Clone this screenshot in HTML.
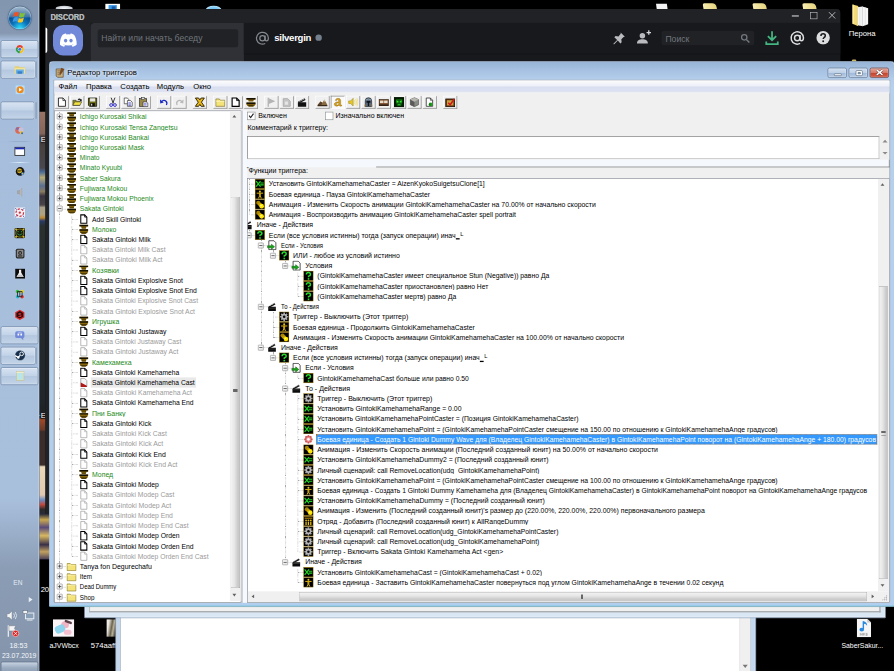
<!DOCTYPE html>
<html lang="ru"><head><meta charset="utf-8"><title>Редактор триггеров</title>
<style>
html,body{margin:0;padding:0;background:#000;width:894px;height:671px;overflow:hidden}
#s{position:absolute;left:0;top:0;width:1400px;height:1051px;transform:scale(0.6385714);transform-origin:0 0;background:#000;overflow:hidden;font-family:"Liberation Sans",sans-serif;font-size:11px;color:#000}
#s *{box-sizing:border-box}
.a{position:absolute}
/* taskbar */
#tb{left:0;top:0;width:61.5px;height:1051px;background:linear-gradient(180deg,#8396af 0,#8799b2 52px,#a6bddb 63px,#a9c0dd 780px,#8b9db5 890px,#8393aa 1051px);border-right:1px solid #6b7d94;box-shadow:inset -1px 0 0 rgba(225,235,248,.7)}
.tbtn{left:1px;width:57px;height:28px;border:1px solid #6f86a3;border-radius:3px;background:linear-gradient(180deg,#d7e3f2 0,#c2d3e8 48%,#b3c7df 52%,#c3d4e8 100%);box-shadow:inset 0 0 0 1px rgba(255,255,255,.55)}
.tico{left:22px;width:16px;height:16px}
.tray{color:#fff;font-size:12px;text-align:center;width:60px;left:0}
/* discord */
#dc{left:70.500px;top:14px;width:1245px;height:791px;background:#18191c;border-radius:6px 6px 0 0;overflow:hidden}
#dc .ttl{left:0;top:0;width:100%;height:22px;background:#202225}
#dc .guild{left:0;top:22px;width:71px;height:770px;background:#202225}
#dc .chan{left:71px;top:22px;width:240px;height:900px;background:#2f3136;border-radius:6px 0 0 0}
#dc .hdr{left:311px;top:22px;width:940px;height:48px;background:#18191c;box-shadow:0 1px 0 #101113}
/* win7 window */
#we{left:75.5px;top:95px;width:1326px;height:856px;border-radius:7px 7px 2px 2px;background:linear-gradient(180deg,#97b3d5 0,#a6c1e2 14px,#b3cdeb 28px,#b6d1ee 40px,#b1ceee 100%);border:1px solid #4a6078;border-bottom:1.500px solid #0c1c24;box-shadow:inset 0 0 0 1px rgba(255,255,255,.6),inset 0 -1.500px 0 #4fc3e0}
#cl{left:7px;top:29px;width:1310px;height:818px;background:#f0f0f0;border:1px solid #7a8a9c}
#mb{left:0;top:0;width:1308px;height:20px;background:linear-gradient(180deg,#fdfdfe 0,#eceff8 45%,#d8deef 55%,#dfe4f3 100%);border-bottom:1px solid #f7f7f7}
#mb span{position:absolute;top:3px;font-size:12px}
.cb{top:9.500px;width:30px;height:16px;border:1px solid #60738c;border-radius:3px;background:linear-gradient(180deg,#d3e0f0 0,#bfd1e8 48%,#9fb9d9 52%,#b9cde6 100%);box-shadow:inset 0 0 0 1px rgba(255,255,255,.55)}
.cbx{border-color:#6a3028;background:linear-gradient(180deg,#e7a596 0,#d67866 48%,#c3442f 52%,#d4634b 100%);box-shadow:inset 0 0 0 1px rgba(255,255,255,.3)}
.tbb{top:24px;width:22px;height:20px;border:1px solid;border-color:#fff #7c7c7c #7c7c7c #fff;background:#f0f0f0}
.tbb svg{position:absolute;left:2px;top:1px}
.tree{background:#fff;border:1px solid #828790;overflow:hidden}
.r{position:absolute;left:0;height:16px;width:3000px;white-space:nowrap}
.r .i{position:absolute;top:0;width:16px;height:16px}
.r .ic{display:block}
.r .t{position:absolute;top:0;height:16px;line-height:16.400px;padding:0 2px;font-size:11px;transform-origin:2px 0}
.t.gr{color:#1c8a22}.t.gy{color:#9a9a9a}.t.bk{color:#000}
.t.sel{background:#e9e9e9}
.t.hl{background:#3399ff;color:#fff;outline:1px dotted #cc6600;outline-offset:-1px}
.t sup{font-size:9px;line-height:0;vertical-align:3.500px;margin-left:1px}
.t u{text-decoration:none;display:inline-block;width:6px;height:1.600px;background:#000;color:transparent;line-height:1px;overflow:hidden;vertical-align:-2.500px}
.bx{position:absolute;width:9px;height:9px;border:1px solid #919191;background:linear-gradient(135deg,#fff,#e4e4e4);border-radius:1px}
.bx .h{position:absolute;left:1px;top:3px;width:5px;height:1px;background:#222}
.bx .v{position:absolute;left:3px;top:1px;width:1px;height:5px;background:#222}
.vl{position:absolute;width:0;border-left:1px dotted #a8a8a8}
.hl_{position:absolute;height:0;border-top:1px dotted #a8a8a8}
.sb{background:#f0f0f0}
.thumb{background:linear-gradient(90deg,#f3f3f3,#e6e6e6 40%,#cecece 75%,#c4c4c4);border:1px solid;border-color:#b4b4b4 #9c9c9c #9c9c9c #b4b4b4;border-radius:2px}
.thumbh{background:linear-gradient(180deg,#f3f3f3,#e6e6e6 40%,#cecece 75%,#c4c4c4);border:1px solid;border-color:#b4b4b4 #9c9c9c #9c9c9c #b4b4b4;border-radius:2px}
.arr{width:0;height:0;border:4px solid transparent}
.lbl{font-size:11px;white-space:nowrap}
.dk{color:#fff;font-size:12px;white-space:nowrap;text-align:center;text-shadow:0 1px 2px #000}
.dk span{display:inline-block;transform:scaleX(.9)}
</style></head><body>
<div id="s">
<!-- wallpaper strip -->
<div class="a" style="left:61px;top:175.4px;width:18px;height:700.6px;background:linear-gradient(180deg,#9a7464 0px,#86665a 34px,#463c3c 39px,#484240 60px,#48484e 88px,#4a6a98 94px,#b8ac78 103px,#5a7090 116px,#8a7a60 125px,#3a3440 132px,#4a4448 146px,#a8a088 150px,#b0a480 161px,#c08a30 166px,#283a68 171px,#2a302e 179px,#20262a 451px,#1e2020 479px,#a04a28 482px,#6a3a28 498px,#3a2c28 501px,#3a2c28 553px,#e8d8b8 556px,#e0c8b0 600px,#6a8ac0 608px,#c04a40 615px,#2a2a2a 623px,#2a2a3a 630px,#c8a850 639px,#5a4a7a 651px,#d8b860 664px,#3a3048 678px,#c0a060 689px,#4a4058 701px)"></div>
<div class="a dk" style="left:64px;top:210.8px;line-height:16px">E</div>
<div class="a dk" style="left:60px;top:643.1px;line-height:16px">·E</div>

<!-- top peeking icons -->
<div class="a" style="left:87px;top:8.500px;width:27px;height:8px;border-radius:50%;background:radial-gradient(ellipse at center,#f4f6f8 0,#c8ccd2 60%,#6a6e74 100%)"></div>
<div class="a" style="left:165px;top:6px;width:23px;height:9px;background:#fff"><i class="a" style="left:5px;top:2px;width:13px;height:7px;background:#3a9ae8"></i><i class="a" style="left:10px;top:4px;width:6px;height:4px;background:#1a5aa8"></i></div>
<div class="a" style="left:322px;top:8.500px;width:25px;height:14px;border-radius:50%;background:radial-gradient(ellipse at 50% 60%,#4ab4f0 0,#8ad0f8 55%,#eef8ff 85%)"></div>
<div class="a" style="left:1028px;top:6px;width:17px;height:10px;background:#f4f4f4;transform:skewX(8deg)"></div>
<div class="a" style="left:1101px;top:5px;width:21px;height:10px;background:linear-gradient(90deg,#f8eeb4,#e4d27a);border-radius:3px 6px 0 0;transform:skewX(10deg)"></div>
<div class="a" style="left:1179px;top:5px;width:21px;height:10px;background:linear-gradient(90deg,#f8eeb4,#e4d27a);border-radius:3px 6px 0 0;transform:skewX(10deg)"></div>
<div class="a" style="left:1257px;top:5px;width:21px;height:10px;background:linear-gradient(90deg,#f8eeb4,#e4d27a);border-radius:3px 6px 0 0;transform:skewX(10deg)"></div>
<!-- Perona folder -->
<svg class="a" style="left:1331px;top:4px" width="34" height="38" viewBox="0 0 34 38"><path d="M4 3l9 2.500v31.500l-9-4z" fill="#f4da74"/><path d="M4 3l2.500.7v30.400L4 33z" fill="#fbe89a"/><path d="M11.500 7.500l8-1.500 9 3v25l-8.500 3-8.500-2z" fill="#f7f7f7"/><path d="M19.500 6v31" stroke="#c4c4c4" stroke-width="1"/><path d="M15.500 6.800v29.500M24 7.500v28" stroke="#dedede" stroke-width="1"/><path d="M11.500 7.500v27.500" stroke="#d8c46a" stroke-width="1"/></svg>
<div class="a dk" style="left:1310px;top:45px;width:80px;line-height:16px">Перона</div>
<div class="a" style="left:1334px;top:93px;width:7px;height:3px;background:#c8b868;border-radius:2px 2px 0 0"></div>
<!-- labels / thumbs bottom -->
<div class="a dk" style="left:64px;top:915px;line-height:16px;text-align:left;letter-spacing:-.5px">20</div>
<div class="a" style="left:83px;top:970px;width:32.500px;height:27px;background:#fbf4f7"><i class="a" style="left:13px;top:3px;width:12px;height:11px;border-radius:6px;background:#f0b4c4"></i><i class="a" style="left:3px;top:9px;width:16px;height:12px;background:#8ed4ec;border-radius:5px;transform:rotate(-25deg)"></i><i class="a" style="left:18px;top:2px;width:12px;height:4px;background:#5a4048;border-radius:2px;transform:rotate(20deg)"></i><i class="a" style="left:17px;top:16px;width:12px;height:8px;background:#f4c0d0;border-radius:4px"></i></div>
<div class="a dk" style="left:60px;top:1002px;width:81px;line-height:16px"><span>aJVWbcx</span></div>
<div class="a" style="left:166.500px;top:970px;width:17px;height:27px;background:linear-gradient(100deg,#f4f2ee 0,#e8e4dc 20%,#6a6450 45%,#b8b098 60%,#4a4636 80%,#2a2820 100%)"></div>
<div class="a dk" style="left:142px;top:1002px;line-height:16px;text-align:left">574aaff...</div>
<!-- mp3 -->
<svg class="a" style="left:1338px;top:968.500px" width="29" height="29" viewBox="0 0 29 29"><path d="M4 0h16l6 6v23H4z" fill="#f6f6f6"/><path d="M20 0v6h6z" fill="#c8c8c8"/><path d="M14 4v12.500" stroke="#2a8ae0" stroke-width="2.200"/><path d="M14 4q6 1 6 7-2-3.500-6-3z" fill="#2a8ae0"/><ellipse cx="11.500" cy="17" rx="3.600" ry="2.800" fill="#2a8ae0"/><rect x="8" y="22" width="13" height="5" fill="#e4e4e4"/><path d="M9.500 26v-3l1.500 2 1.500-2v3M14 26v-3h1.500q1 .8 0 1.600H14M18 23h1.800v1.500H18.500M18 26h1.800v-1.500" stroke="#8a8a8a" stroke-width=".7" fill="none"/></svg>
<div class="a dk" style="left:1300px;top:1002px;width:100px;line-height:16px"><span>SaberSakur...</span></div>

<!-- window B (white, behind) -->
<div class="a" style="left:181px;top:700px;width:1003px;height:360px;background:#c3d7ee;border:1px solid #6d7f95;box-shadow:inset 0 0 0 1px rgba(255,255,255,.7)">
 <div class="a" style="left:6px;top:0;width:988px;height:360px;background:#fff;border-left:1px solid #9aa7b6;border-right:1px solid #9aa7b6"></div>
 <div class="a" style="left:976px;top:0;width:17px;height:360px;background:#f0f0f0;border-left:1px solid #e2e2e2"><i class="a arr" style="left:4px;top:340px;border-top:5px solid #777;border-bottom:0"></i></div>
</div>
<!-- window A (WE main window bottom frame) -->
<div class="a" style="left:132px;top:700px;width:1255px;height:267.500px;background:#d9e6f4;border:1px solid #8da0b6;border-radius:0 0 1px 1px;box-shadow:inset 0 0 0 1px rgba(255,255,255,.7)">
 <div class="a" style="left:7px;top:0;width:1239px;height:258px;background:#f0f0f0;border:1px solid #a0a4aa;border-width:0 2px 2px 1px"></div>
</div>

<div id="dc" class="a">
 <div class="a ttl"></div>
 <div class="a guild"></div>
 <div class="a chan"></div>
 <div class="a hdr"></div>
 <div class="a" style="left:8px;top:6px;font-size:12.800px;font-weight:bold;color:#b4b7bb;line-height:14px;transform:scaleX(.9);transform-origin:0 0;text-shadow:.4px 0 0 #a9acb1">DISCORD</div>
 <div class="a" style="left:0;top:29px;width:3px;height:40px;background:#fff;border-radius:0 4px 4px 0"></div>
 <div class="a" style="left:12px;top:25px;width:47px;height:48px;background:#7289da;border-radius:16px">
  <svg class="a" style="left:9px;top:11px" width="30" height="26" viewBox="0 0 30 26"><path d="M6 4.500C8.500 3 11 2.500 11.500 2.600L12 4Q15 3.600 18 4L18.500 2.600C19 2.500 21.500 3 24 4.500C27 9 28.500 15 28 20C26 21.800 23.500 22.800 21.500 23.200L20 21C21.500 20.500 22.500 20 23.500 19.200C18 22 12 22 6.500 19.200C7.500 20 8.500 20.500 10 21L8.500 23.200C6.500 22.800 4 21.800 2 20C1.500 15 3 9 6 4.500Z" fill="#fff"/><ellipse cx="10.800" cy="13.500" rx="2.600" ry="2.900" fill="#7289da"/><ellipse cx="19.200" cy="13.500" rx="2.600" ry="2.900" fill="#7289da"/></svg>
 </div>
 <div class="a" style="left:82px;top:32px;width:220px;height:28px;background:#202225;border-radius:4px"></div>
 <div class="a" style="left:88px;top:37px;font-size:13.500px;color:#72767d;line-height:18px;white-space:nowrap">Найти или начать беседу</div>
 <svg class="a" style="left:328px;top:33.500px" width="24" height="24" viewBox="0 0 25 25"><circle cx="12.500" cy="12.500" r="4.300" fill="none" stroke="#858990" stroke-width="2"/><path d="M16.800 8v6.500q0 2.300 2.200 2.300 3.200 0 3.200-4.800A9.700 9.700 0 1 0 17 21" fill="none" stroke="#858990" stroke-width="2"/></svg>
 <div class="a" style="left:359px;top:36px;font-size:15px;font-weight:bold;color:#fff;line-height:18px;letter-spacing:-.45px">silvergin</div>
 <div class="a" style="left:423px;top:40px;width:10px;height:10px;border-radius:5px;background:#747f8d"></div>
 <!-- window controls -->
 <div class="a" style="left:1169px;top:10px;width:11px;height:1.500px;background:#b9bbbe"></div>
 <div class="a" style="left:1198px;top:5px;width:11px;height:11px;border:1.500px solid #b9bbbe"></div>
 <svg class="a" style="left:1226px;top:4px" width="12" height="12" viewBox="0 0 12 12"><path d="M1 1l10 10M11 1L1 11" stroke="#b9bbbe" stroke-width="1.500"/></svg>
 <!-- header right icons -->
 <svg class="a" style="left:886px;top:34px" width="24" height="24" viewBox="0 0 24 24"><path d="M15 3l6.500 6.500-2 .5-3.500 3.500.5 4.500-2 2-4-4.500-6 6-1-1 6-6-4.500-4 2-2 4.500.5L15 5z" fill="#b9bbbe"/></svg>
 <svg class="a" style="left:925px;top:33px" width="28" height="24" viewBox="0 0 28 24"><circle cx="10" cy="9" r="4.300" fill="#b9bbbe"/><path d="M1.500 21c0-5 3.500-6.500 8.500-6.500s8.500 1.500 8.500 6.500z" fill="#b9bbbe"/><path d="M20 .5v7M16.500 4h7" stroke="#d4d6d8" stroke-width="2"/></svg>
 <div class="a" style="left:965px;top:34px;width:145px;height:23px;background:#202225;border-radius:4px"></div>
 <div class="a" style="left:971.500px;top:39px;font-size:13.500px;color:#72767d;line-height:16px">Поиск</div>
 <svg class="a" style="left:1088px;top:38px" width="16" height="16" viewBox="0 0 16 16"><circle cx="6.500" cy="6.500" r="4.200" fill="none" stroke="#72767d" stroke-width="2"/><path d="M9.800 9.800L14.500 14.500" stroke="#72767d" stroke-width="2.400"/></svg>
 <svg class="a" style="left:1126px;top:33px" width="24" height="26" viewBox="0 0 24 26"><path d="M12 2v13M5.500 9.500L12 16l6.500-6.500" stroke="#43b581" stroke-width="2.800" fill="none"/><path d="M3 18v4h18v-4" stroke="#43b581" stroke-width="2.800" fill="none"/></svg>
 <svg class="a" style="left:1165px;top:33px" width="25" height="25" viewBox="0 0 25 25"><circle cx="12.500" cy="12.500" r="4.300" fill="none" stroke="#dcddde" stroke-width="2.300"/><path d="M16.800 8v6.500q0 2.300 2.200 2.300 3.200 0 3.200-4.800A9.700 9.700 0 1 0 17 21" fill="none" stroke="#dcddde" stroke-width="2.300"/></svg>
 <svg class="a" style="left:1207px;top:34px" width="22" height="22" viewBox="0 0 22 22"><circle cx="11" cy="11" r="10.500" fill="#dcddde"/><path d="M7.600 8.300q0-3.300 3.400-3.300t3.400 3q0 1.800-1.900 2.800-1.300.8-1.300 2.200" fill="none" stroke="#18191c" stroke-width="2.400"/><circle cx="11.100" cy="16.600" r="1.500" fill="#18191c"/></svg>
</div>

<div id="we" class="a">
 <!-- title -->
 <svg class="a" style="left:8px;top:9px" width="18" height="18" viewBox="0 0 18 18"><path d="M3 3h9l2 2v11H5l-2-2z" fill="#c8b080" stroke="#5a4020" stroke-width="1"/><path d="M5 6h6M5 9h6M5 12h5" stroke="#6a5030" stroke-width="1"/><path d="M11 1l5 2-6 9-2-1z" fill="#7a4a20"/></svg>
 <div class="a" style="left:29px;top:11px;font-size:12px;line-height:15px;white-space:nowrap;text-shadow:0 0 6px #fff,0 0 6px #fff">Редактор триггеров</div>
 <!-- caption buttons -->
 <div class="a cb" style="left:1219px"><i class="a" style="left:9px;top:8px;width:12px;height:4px;background:#fff;border:1px solid #54657a;border-radius:1.500px"></i></div>
 <div class="a cb" style="left:1252px"><i class="a" style="left:10px;top:3px;width:11px;height:9px;background:#fff;border:1px solid #54657a;border-radius:2px"></i><i class="a" style="left:13.500px;top:6px;width:5px;height:3px;background:#7f9cc0;border:1px solid #54657a;border-radius:1px"></i></div>
 <div class="a cb cbx" style="left:1285px"><svg class="a" style="left:8px;top:1.500px" width="13" height="11" viewBox="0 0 13 11"><path d="M2 1.500l9 8M11 1.500l-9 8" stroke="#5a3434" stroke-width="3.800"/><path d="M2 1.500l9 8M11 1.500l-9 8" stroke="#fff" stroke-width="2.300"/></svg></div>
 <!-- client -->
 <div id="cl" class="a">
  <div id="mb" class="a"><span style="left:7px">Файл</span><span style="left:50px">Правка</span><span style="left:104px">Создать</span><span style="left:161px">Модуль</span><span style="left:218px">Окно</span></div>
  <div class="a tbb" style="left:1.0px"><svg width="16" height="16" viewBox="0 0 16 16"><path d="M2.500 1.500h7l4 4v9h-11z" fill="#fff" stroke="#000" stroke-width="1.200"/><path d="M9.500 1.500v4h4" fill="none" stroke="#000" stroke-width="1"/></svg></div>
<div class="a tbb" style="left:25.0px"><svg width="16" height="16" viewBox="0 0 16 16"><path d="M1 5h5l1 1.500h5V13H1z" fill="#8a8a20" stroke="#222" stroke-width=".8"/><path d="M1 13l3-5.500h11L12 13z" fill="#f0e040" stroke="#222" stroke-width=".8"/><path d="M9 3q3-2 5 1l1-1v3.500h-3.500l1-1q-1.500-2-3.500-.5z" fill="#222"/></svg></div>
<div class="a tbb" style="left:49.0px"><svg width="16" height="16" viewBox="0 0 16 16"><path d="M1.500 1.500h13v13h-11.500l-1.500-1.500z" fill="#6a6a14" stroke="#111" stroke-width="1.200"/><rect x="4" y="2" width="8" height="5" fill="#e8e8e8"/><rect x="4.500" y="9.500" width="7" height="5" fill="#111"/><rect x="5.500" y="10.500" width="2" height="3" fill="#ccc"/></svg></div>
<div class="a tbb" style="left:81.0px"><svg width="16" height="16" viewBox="0 0 16 16"><path d="M5 1l3.500 9M11 1L7.500 10" stroke="#222" stroke-width="1.400" fill="none"/><circle cx="5" cy="12.500" r="2.200" fill="none" stroke="#2a2ac8" stroke-width="1.500"/><circle cx="11" cy="12.500" r="2.200" fill="none" stroke="#2a2ac8" stroke-width="1.500"/></svg></div>
<div class="a tbb" style="left:105.0px"><svg width="16" height="16" viewBox="0 0 16 16"><path d="M1.500 1.500h5l2 2v7h-7z" fill="#fff" stroke="#222" stroke-width="1"/><path d="M6.500 5.500h5l2.500 2.500v6.500h-7.500z" fill="#fff" stroke="#222" stroke-width="1"/><path d="M8 9h4M8 11h4M8 13h4" stroke="#2a2ac8" stroke-width="1"/></svg></div>
<div class="a tbb" style="left:129.0px"><svg width="16" height="16" viewBox="0 0 16 16"><rect x="1.500" y="2.500" width="11" height="12" fill="#9a8a4a" stroke="#222" stroke-width="1"/><rect x="4.500" y="1" width="5" height="3" fill="#ddd" stroke="#222" stroke-width=".8"/><path d="M7 7.500h5l2.500 2v5.500H7z" fill="#fff" stroke="#222" stroke-width="1"/><path d="M8.500 10.500h4M8.500 12.500h4" stroke="#2a2ac8" stroke-width="1"/></svg></div>
<div class="a tbb" style="left:161.0px"><svg width="16" height="16" viewBox="0 0 16 16"><path d="M3 8.500q4-5.500 8-2 2.500 2.500.5 6" stroke="#1a2ac0" stroke-width="2" fill="none"/><path d="M1.500 4l.5 6 5.500-1.500z" fill="#1a2ac0"/></svg></div>
<div class="a tbb" style="left:185.0px"><svg width="16" height="16" viewBox="0 0 16 16"><path d="M13 8.500q-4-5.500-8-2-2.500 2.500-.5 6" stroke="#b8b8b8" stroke-width="2" fill="none"/><path d="M14.500 4l-.5 6-5.500-1.500z" fill="#b8b8b8"/></svg></div>
<div class="a tbb" style="left:217.0px"><svg width="16" height="16" viewBox="0 0 16 16"><path d="M1 1.500h5l2 3 2-3h5L10.500 8l4.500 6.500h-5L8 11.500l-2 3H1L5.500 8z" fill="#e8b818" stroke="#221a00" stroke-width="1.400"/></svg></div>
<div class="a tbb" style="left:249.0px"><svg width="16" height="16" viewBox="0 0 16 16"><path d="M1 3h5.500l1.500 2h7v9.500h-14z" fill="#f4e27a" stroke="#7a6a20" stroke-width="1"/><path d="M1.500 6.500h13" stroke="#fffbd0" stroke-width="1.200"/></svg></div>
<div class="a tbb" style="left:273.0px"><svg width="16" height="16" viewBox="0 0 16 16"><path d="M2.500 1.500h7l4 4v9h-11z" fill="#fff" stroke="#000" stroke-width="1.800"/><path d="M9.500 1.500v4h4" fill="none" stroke="#000" stroke-width="1.300"/></svg></div>
<div class="a tbb" style="left:297.0px"><svg width="16" height="16" viewBox="0 0 16 16"><path d="M1 1.500h14v2.600h-2.500l-1 3h-7l-1-3H1z" fill="#7a5c0a"/><path d="M1 1.500h14v2.400H1z" fill="#161000"/><path d="M1 8.500h14v2.600q-.5 3-4 4h-6q-3.500-1-4-4z" fill="#7a5c0a"/><path d="M1 8.500h14v2.400H1z" fill="#161000"/><path d="M4 13.500h8" stroke="#3a2a02" stroke-width="1.500"/></svg></div>
<div class="a tbb" style="left:329.0px"><svg width="16" height="16" viewBox="0 0 16 16"><path d="M3 1v14" stroke="#a0a0a0" stroke-width="1.600"/><path d="M4 2l10 4.500-10 4.500z" fill="#b4b4b4"/></svg></div>
<div class="a tbb" style="left:353.0px"><svg width="16" height="16" viewBox="0 0 16 16"><path d="M2.500 2.500h7l4 4v8h-11z" fill="#c4c4c4" stroke="#a4a4a4" stroke-width="1.200"/><rect x="5" y="7" width="5" height="5" fill="#e4e4e4"/></svg></div>
<div class="a tbb" style="left:377.0px"><svg width="16" height="16" viewBox="0 0 16 16"><path d="M1.500 8h13v7h-13z" fill="#111"/><path d="M1.500 7.500L12 2l1.500 2.500L3 10z" fill="#1c1c1c"/><path d="M4 7l1.600-.9M7 5.400l1.600-.9M10 3.800l1.500-.8" stroke="#e8e8e8" stroke-width="1.400"/></svg></div>
<div class="a tbb" style="left:409.0px"><svg width="16" height="16" viewBox="0 0 16 16"><path d="M0 13l5-6 3 2 3-5 5 9z" fill="#8a6a42"/><path d="M0 13l5-6 3 2-2 4z" fill="#5a4228"/><path d="M0 12.500h16v2H0z" fill="#3a2a18"/><path d="M9.500 6.500l1.500-2.500 2 3.500z" fill="#d8c8a8"/></svg></div>
<div class="a tbb" style="left:433.0px;border-color:#7c7c7c #fff #fff #7c7c7c;background:#fafafa"><svg width="16" height="16" viewBox="0 0 16 16"><path d="M4 5q1-3 4.500-3 4 0 4 3.500v6q0 1.200 1.500 1v1.500q-3.500 1-4.200-1.200-1.800 1.700-4.300 1.500-3-.3-3-3 0-3.800 7-4v-1.300q0-2-2-2-1.800 0-1.800 1.800zM9.500 9q-4 .2-4 2 0 1.500 1.600 1.500 1.400 0 2.400-1.200z" fill="#d8a010" stroke="#6a4a00" stroke-width=".5"/></svg></div>
<div class="a tbb" style="left:457.0px"><svg width="16" height="16" viewBox="0 0 16 16"><path d="M1 6h3l4-4v12l-4-4H1z" fill="#e8c820" stroke="#8a7210" stroke-width=".7"/><path d="M10 5q2 3 0 6M12 3.500q3 4.500 0 9M14 2q3.500 6 0 12" stroke="#f0d850" stroke-width="1" fill="none"/></svg></div>
<div class="a tbb" style="left:481.0px"><svg width="16" height="16" viewBox="0 0 16 16"><path d="M3 15V6q0-5 5-5t5 5v9z" fill="#5a6a7a" stroke="#1a2028" stroke-width="1"/><path d="M5 6h6v3H9v5H7V9H5z" fill="#0e1418"/><path d="M4 4.500q4-3 8 0" stroke="#9ab0c4" stroke-width="1.200" fill="none"/><path d="M2 12l2-1v4H2zM14 12l-2-1v4h2z" fill="#8a6a3a"/></svg></div>
<div class="a tbb" style="left:505.0px"><svg width="16" height="16" viewBox="0 0 16 16"><rect x="0.500" y="4" width="15" height="8" fill="#7a4a28" stroke="#2a1808" stroke-width="1"/><rect x="2" y="5.500" width="5.500" height="4" fill="#e8dcc8"/><rect x="8.500" y="5.500" width="5.500" height="4" fill="#e8dcc8"/><path d="M0 12h16v2H0z" fill="#3a2210"/></svg></div>
<div class="a tbb" style="left:529.0px"><svg width="16" height="16" viewBox="0 0 16 16"><rect width="16" height="16" fill="#041a04"/><path d="M3 3h10v6l-2 5H5L3 9z" fill="#0a5a0a"/><path d="M4 5l3 1.500v2H4zM12 5L9 6.500v2h3z" fill="#30e830"/><path d="M6 11h4v2H6z" fill="#20b020"/></svg></div>
<div class="a tbb" style="left:553.0px"><svg width="16" height="16" viewBox="0 0 16 16"><path d="M8 1l6.500 3v8L8 15 1.500 12V4z" fill="#8a8a86" stroke="#3a3a38" stroke-width=".8"/><path d="M8 7.500V15L1.500 12V4z" fill="#5a5a58"/><path d="M8 7.500L14.500 4 8 1 1.500 4z" fill="#b8b8b2"/></svg></div>
<div class="a tbb" style="left:577.0px"><svg width="16" height="16" viewBox="0 0 16 16"><path d="M2.500 1.500h6.500l3.500 3.500v9.500h-10z" fill="#fff" stroke="#222" stroke-width="1.200"/><path d="M9 1.500v3.500h3.500" fill="none" stroke="#222" stroke-width="1"/><path d="M7 9h5v5H7z" fill="#20a020"/><path d="M6 11.500l3-3v6z" fill="#107010"/></svg></div>
<div class="a tbb" style="left:609.0px"><svg width="16" height="16" viewBox="0 0 16 16"><rect x="1" y="3" width="14" height="12" fill="#6a3a10" stroke="#1a0a00" stroke-width="1.200"/><rect x="3" y="5" width="10" height="8" fill="#c8a040"/><path d="M5 9l3 3 6.500-9" stroke="#d01818" stroke-width="2.400" fill="none"/></svg></div>
  <!-- left tree: abs (85.5,174) -> rel client (85.5-85, 174-125) -->
  <div class="a tree" id="lt" style="left:0px;top:47px;width:293px;height:771px">
   <i class="vl" style="left:7.5px;top:0.6px;height:16px"></i><i class="hl_" style="left:7.5px;top:8.6px;width:10px"></i><i class="vl" style="left:7.5px;top:16.6px;height:16px"></i><i class="hl_" style="left:7.5px;top:24.6px;width:10px"></i><i class="vl" style="left:7.5px;top:32.6px;height:16px"></i><i class="hl_" style="left:7.5px;top:40.6px;width:10px"></i><i class="vl" style="left:7.5px;top:48.6px;height:16px"></i><i class="hl_" style="left:7.5px;top:56.6px;width:10px"></i><i class="vl" style="left:7.5px;top:64.6px;height:16px"></i><i class="hl_" style="left:7.5px;top:72.6px;width:10px"></i><i class="vl" style="left:7.5px;top:80.6px;height:16px"></i><i class="hl_" style="left:7.5px;top:88.6px;width:10px"></i><i class="vl" style="left:7.5px;top:96.6px;height:16px"></i><i class="hl_" style="left:7.5px;top:104.6px;width:10px"></i><i class="vl" style="left:7.5px;top:112.6px;height:16px"></i><i class="hl_" style="left:7.5px;top:120.6px;width:10px"></i><i class="vl" style="left:7.5px;top:128.6px;height:16px"></i><i class="hl_" style="left:7.5px;top:136.6px;width:10px"></i><i class="vl" style="left:7.5px;top:144.6px;height:16px"></i><i class="hl_" style="left:7.5px;top:152.6px;width:10px"></i><i class="vl" style="left:7.5px;top:160.6px;height:16px"></i><i class="vl" style="left:26.5px;top:160.6px;height:16px"></i><i class="hl_" style="left:26.5px;top:168.6px;width:10px"></i><i class="vl" style="left:7.5px;top:176.6px;height:16px"></i><i class="vl" style="left:26.5px;top:176.6px;height:16px"></i><i class="hl_" style="left:26.5px;top:184.6px;width:10px"></i><i class="vl" style="left:7.5px;top:192.6px;height:16px"></i><i class="vl" style="left:26.5px;top:192.6px;height:16px"></i><i class="hl_" style="left:26.5px;top:200.6px;width:10px"></i><i class="vl" style="left:7.5px;top:208.6px;height:16px"></i><i class="vl" style="left:26.5px;top:208.6px;height:16px"></i><i class="hl_" style="left:26.5px;top:216.6px;width:10px"></i><i class="vl" style="left:7.5px;top:224.6px;height:16px"></i><i class="vl" style="left:26.5px;top:224.6px;height:16px"></i><i class="hl_" style="left:26.5px;top:232.6px;width:10px"></i><i class="vl" style="left:7.5px;top:240.6px;height:16px"></i><i class="vl" style="left:26.5px;top:240.6px;height:16px"></i><i class="hl_" style="left:26.5px;top:248.6px;width:10px"></i><i class="vl" style="left:7.5px;top:256.6px;height:16px"></i><i class="vl" style="left:26.5px;top:256.6px;height:16px"></i><i class="hl_" style="left:26.5px;top:264.6px;width:10px"></i><i class="vl" style="left:7.5px;top:272.6px;height:16px"></i><i class="vl" style="left:26.5px;top:272.6px;height:16px"></i><i class="hl_" style="left:26.5px;top:280.6px;width:10px"></i><i class="vl" style="left:7.5px;top:288.6px;height:16px"></i><i class="vl" style="left:26.5px;top:288.6px;height:16px"></i><i class="hl_" style="left:26.5px;top:296.6px;width:10px"></i><i class="vl" style="left:7.5px;top:304.6px;height:16px"></i><i class="vl" style="left:26.5px;top:304.6px;height:16px"></i><i class="hl_" style="left:26.5px;top:312.6px;width:10px"></i><i class="vl" style="left:7.5px;top:320.6px;height:16px"></i><i class="vl" style="left:26.5px;top:320.6px;height:16px"></i><i class="hl_" style="left:26.5px;top:328.6px;width:10px"></i><i class="vl" style="left:7.5px;top:336.6px;height:16px"></i><i class="vl" style="left:26.5px;top:336.6px;height:16px"></i><i class="hl_" style="left:26.5px;top:344.6px;width:10px"></i><i class="vl" style="left:7.5px;top:352.6px;height:16px"></i><i class="vl" style="left:26.5px;top:352.6px;height:16px"></i><i class="hl_" style="left:26.5px;top:360.6px;width:10px"></i><i class="vl" style="left:7.5px;top:368.6px;height:16px"></i><i class="vl" style="left:26.5px;top:368.6px;height:16px"></i><i class="hl_" style="left:26.5px;top:376.6px;width:10px"></i><i class="vl" style="left:7.5px;top:384.6px;height:16px"></i><i class="vl" style="left:26.5px;top:384.6px;height:16px"></i><i class="hl_" style="left:26.5px;top:392.6px;width:10px"></i><i class="vl" style="left:7.5px;top:400.6px;height:16px"></i><i class="vl" style="left:26.5px;top:400.6px;height:16px"></i><i class="hl_" style="left:26.5px;top:408.6px;width:10px"></i><i class="vl" style="left:7.5px;top:416.6px;height:16px"></i><i class="vl" style="left:26.5px;top:416.6px;height:16px"></i><i class="hl_" style="left:26.5px;top:424.6px;width:10px"></i><i class="vl" style="left:7.5px;top:432.6px;height:16px"></i><i class="vl" style="left:26.5px;top:432.6px;height:16px"></i><i class="hl_" style="left:26.5px;top:440.6px;width:10px"></i><i class="vl" style="left:7.5px;top:448.6px;height:16px"></i><i class="vl" style="left:26.5px;top:448.6px;height:16px"></i><i class="hl_" style="left:26.5px;top:456.6px;width:10px"></i><i class="vl" style="left:7.5px;top:464.6px;height:16px"></i><i class="vl" style="left:26.5px;top:464.6px;height:16px"></i><i class="hl_" style="left:26.5px;top:472.6px;width:10px"></i><i class="vl" style="left:7.5px;top:480.6px;height:16px"></i><i class="vl" style="left:26.5px;top:480.6px;height:16px"></i><i class="hl_" style="left:26.5px;top:488.6px;width:10px"></i><i class="vl" style="left:7.5px;top:496.6px;height:16px"></i><i class="vl" style="left:26.5px;top:496.6px;height:16px"></i><i class="hl_" style="left:26.5px;top:504.6px;width:10px"></i><i class="vl" style="left:7.5px;top:512.6px;height:16px"></i><i class="vl" style="left:26.5px;top:512.6px;height:16px"></i><i class="hl_" style="left:26.5px;top:520.6px;width:10px"></i><i class="vl" style="left:7.5px;top:528.6px;height:16px"></i><i class="vl" style="left:26.5px;top:528.6px;height:16px"></i><i class="hl_" style="left:26.5px;top:536.6px;width:10px"></i><i class="vl" style="left:7.5px;top:544.6px;height:16px"></i><i class="vl" style="left:26.5px;top:544.6px;height:16px"></i><i class="hl_" style="left:26.5px;top:552.6px;width:10px"></i><i class="vl" style="left:7.5px;top:560.6px;height:16px"></i><i class="vl" style="left:26.5px;top:560.6px;height:16px"></i><i class="hl_" style="left:26.5px;top:568.6px;width:10px"></i><i class="vl" style="left:7.5px;top:576.6px;height:16px"></i><i class="vl" style="left:26.5px;top:576.6px;height:16px"></i><i class="hl_" style="left:26.5px;top:584.6px;width:10px"></i><i class="vl" style="left:7.5px;top:592.6px;height:16px"></i><i class="vl" style="left:26.5px;top:592.6px;height:16px"></i><i class="hl_" style="left:26.5px;top:600.6px;width:10px"></i><i class="vl" style="left:7.5px;top:608.6px;height:16px"></i><i class="vl" style="left:26.5px;top:608.6px;height:16px"></i><i class="hl_" style="left:26.5px;top:616.6px;width:10px"></i><i class="vl" style="left:7.5px;top:624.6px;height:16px"></i><i class="vl" style="left:26.5px;top:624.6px;height:16px"></i><i class="hl_" style="left:26.5px;top:632.6px;width:10px"></i><i class="vl" style="left:7.5px;top:640.6px;height:16px"></i><i class="vl" style="left:26.5px;top:640.6px;height:16px"></i><i class="hl_" style="left:26.5px;top:648.6px;width:10px"></i><i class="vl" style="left:7.5px;top:656.6px;height:16px"></i><i class="vl" style="left:26.5px;top:656.6px;height:16px"></i><i class="hl_" style="left:26.5px;top:664.6px;width:10px"></i><i class="vl" style="left:7.5px;top:672.6px;height:16px"></i><i class="vl" style="left:26.5px;top:672.6px;height:16px"></i><i class="hl_" style="left:26.5px;top:680.6px;width:10px"></i><i class="vl" style="left:7.5px;top:688.6px;height:16px"></i><i class="vl" style="left:26.5px;top:688.6px;height:8px"></i><i class="hl_" style="left:26.5px;top:696.6px;width:10px"></i><i class="vl" style="left:7.5px;top:704.6px;height:16px"></i><i class="hl_" style="left:7.5px;top:712.6px;width:10px"></i><i class="vl" style="left:7.5px;top:720.6px;height:16px"></i><i class="hl_" style="left:7.5px;top:728.6px;width:10px"></i><i class="vl" style="left:7.5px;top:736.6px;height:16px"></i><i class="hl_" style="left:7.5px;top:744.6px;width:10px"></i><i class="vl" style="left:7.5px;top:752.6px;height:16px"></i><i class="hl_" style="left:7.5px;top:760.6px;width:10px"></i>
<div class="r" style="top:0.6px">
<i class="bx" style="left:3.0px;top:3.5px"><b class="h"></b><b class="v"></b></i>
<span class="i" style="left:18.3px"><svg class="ic" width="16" height="16" viewBox="0 0 16 16"><path d="M1.500 1h13.500v2.600h-2.500l-1 3.400h-6.500l-1-3.400h-2.500z" fill="#7c5e0a"/><path d="M4.800 5.500h6.900l-.4 1.500h-6.100z" fill="#4e3a04"/><path d="M1.500 1h13.500v2.300H1.500z" fill="#161000"/><path d="M1.500 8h13.500v2.600q-.5 3.400-4 4.400h-5.500q-3.500-1-4-4.400z" fill="#86660c"/><path d="M2.400 12.500q1.200 2 3.100 2.500h5.500q1.900-.5 3.100-2.500z" fill="#4e3a04"/><path d="M1.500 8h13.500v2.300H1.500z" fill="#161000"/></svg></span><span class="t gr" id="L0" style="left:37.8px;transform:scaleX(0.9649)">Ichigo Kurosaki Shikai</span></div>
<div class="r" style="top:16.6px">
<i class="bx" style="left:3.0px;top:3.5px"><b class="h"></b><b class="v"></b></i>
<span class="i" style="left:18.3px"><svg class="ic" width="16" height="16" viewBox="0 0 16 16"><path d="M1.500 1h13.500v2.600h-2.500l-1 3.400h-6.500l-1-3.400h-2.500z" fill="#7c5e0a"/><path d="M4.800 5.500h6.900l-.4 1.500h-6.100z" fill="#4e3a04"/><path d="M1.500 1h13.500v2.300H1.500z" fill="#161000"/><path d="M1.500 8h13.500v2.600q-.5 3.400-4 4.400h-5.500q-3.500-1-4-4.400z" fill="#86660c"/><path d="M2.400 12.500q1.200 2 3.100 2.500h5.500q1.900-.5 3.100-2.500z" fill="#4e3a04"/><path d="M1.500 8h13.500v2.300H1.500z" fill="#161000"/></svg></span><span class="t gr" id="L1" style="left:37.8px;transform:scaleX(0.9795)">Ichigo Kurosaki Tensa Zangetsu</span></div>
<div class="r" style="top:32.6px">
<i class="bx" style="left:3.0px;top:3.5px"><b class="h"></b><b class="v"></b></i>
<span class="i" style="left:18.3px"><svg class="ic" width="16" height="16" viewBox="0 0 16 16"><path d="M1.500 1h13.500v2.600h-2.500l-1 3.400h-6.500l-1-3.400h-2.500z" fill="#7c5e0a"/><path d="M4.800 5.500h6.900l-.4 1.500h-6.100z" fill="#4e3a04"/><path d="M1.500 1h13.500v2.300H1.500z" fill="#161000"/><path d="M1.500 8h13.500v2.600q-.5 3.400-4 4.400h-5.500q-3.500-1-4-4.400z" fill="#86660c"/><path d="M2.400 12.500q1.200 2 3.100 2.500h5.500q1.900-.5 3.100-2.500z" fill="#4e3a04"/><path d="M1.500 8h13.500v2.300H1.500z" fill="#161000"/></svg></span><span class="t gr" id="L2" style="left:37.8px;transform:scaleX(0.9682)">Ichigo Kurosaki Bankai</span></div>
<div class="r" style="top:48.6px">
<i class="bx" style="left:3.0px;top:3.5px"><b class="h"></b><b class="v"></b></i>
<span class="i" style="left:18.3px"><svg class="ic" width="16" height="16" viewBox="0 0 16 16"><path d="M1.500 1h13.500v2.600h-2.500l-1 3.400h-6.500l-1-3.400h-2.500z" fill="#7c5e0a"/><path d="M4.800 5.500h6.900l-.4 1.500h-6.100z" fill="#4e3a04"/><path d="M1.500 1h13.500v2.300H1.500z" fill="#161000"/><path d="M1.500 8h13.500v2.600q-.5 3.400-4 4.400h-5.500q-3.500-1-4-4.400z" fill="#86660c"/><path d="M2.400 12.500q1.200 2 3.100 2.500h5.500q1.900-.5 3.100-2.500z" fill="#4e3a04"/><path d="M1.500 8h13.500v2.300H1.500z" fill="#161000"/></svg></span><span class="t gr" id="L3" style="left:37.8px;transform:scaleX(0.9644)">Ichigo Kurosaki Mask</span></div>
<div class="r" style="top:64.6px">
<i class="bx" style="left:3.0px;top:3.5px"><b class="h"></b><b class="v"></b></i>
<span class="i" style="left:18.3px"><svg class="ic" width="16" height="16" viewBox="0 0 16 16"><path d="M1.500 1h13.500v2.600h-2.500l-1 3.400h-6.500l-1-3.400h-2.500z" fill="#7c5e0a"/><path d="M4.800 5.500h6.900l-.4 1.500h-6.100z" fill="#4e3a04"/><path d="M1.500 1h13.500v2.300H1.500z" fill="#161000"/><path d="M1.500 8h13.500v2.600q-.5 3.400-4 4.400h-5.500q-3.500-1-4-4.400z" fill="#86660c"/><path d="M2.400 12.500q1.200 2 3.100 2.500h5.500q1.900-.5 3.100-2.500z" fill="#4e3a04"/><path d="M1.500 8h13.500v2.300H1.500z" fill="#161000"/></svg></span><span class="t gr" id="L4" style="left:37.8px;transform:scaleX(0.9334)">Minato</span></div>
<div class="r" style="top:80.6px">
<i class="bx" style="left:3.0px;top:3.5px"><b class="h"></b><b class="v"></b></i>
<span class="i" style="left:18.3px"><svg class="ic" width="16" height="16" viewBox="0 0 16 16"><path d="M1.500 1h13.500v2.600h-2.500l-1 3.400h-6.500l-1-3.400h-2.500z" fill="#7c5e0a"/><path d="M4.800 5.500h6.900l-.4 1.500h-6.100z" fill="#4e3a04"/><path d="M1.500 1h13.500v2.300H1.500z" fill="#161000"/><path d="M1.500 8h13.500v2.600q-.5 3.400-4 4.400h-5.500q-3.500-1-4-4.400z" fill="#86660c"/><path d="M2.400 12.500q1.200 2 3.100 2.500h5.500q1.900-.5 3.100-2.500z" fill="#4e3a04"/><path d="M1.500 8h13.500v2.300H1.500z" fill="#161000"/></svg></span><span class="t gr" id="L5" style="left:37.8px;transform:scaleX(0.9498)">Minato Kyuubi</span></div>
<div class="r" style="top:96.6px">
<i class="bx" style="left:3.0px;top:3.5px"><b class="h"></b><b class="v"></b></i>
<span class="i" style="left:18.3px"><svg class="ic" width="16" height="16" viewBox="0 0 16 16"><path d="M1.500 1h13.500v2.600h-2.500l-1 3.400h-6.500l-1-3.400h-2.500z" fill="#7c5e0a"/><path d="M4.800 5.500h6.900l-.4 1.500h-6.100z" fill="#4e3a04"/><path d="M1.500 1h13.500v2.300H1.500z" fill="#161000"/><path d="M1.500 8h13.500v2.600q-.5 3.400-4 4.400h-5.500q-3.500-1-4-4.400z" fill="#86660c"/><path d="M2.400 12.500q1.200 2 3.100 2.500h5.500q1.900-.5 3.100-2.500z" fill="#4e3a04"/><path d="M1.500 8h13.500v2.300H1.500z" fill="#161000"/></svg></span><span class="t gr" id="L6" style="left:37.8px;transform:scaleX(0.9519)">Saber Sakura</span></div>
<div class="r" style="top:112.6px">
<i class="bx" style="left:3.0px;top:3.5px"><b class="h"></b><b class="v"></b></i>
<span class="i" style="left:18.3px"><svg class="ic" width="16" height="16" viewBox="0 0 16 16"><path d="M1.500 1h13.500v2.600h-2.500l-1 3.400h-6.500l-1-3.400h-2.500z" fill="#7c5e0a"/><path d="M4.800 5.500h6.900l-.4 1.500h-6.100z" fill="#4e3a04"/><path d="M1.500 1h13.500v2.300H1.500z" fill="#161000"/><path d="M1.500 8h13.500v2.600q-.5 3.400-4 4.400h-5.500q-3.500-1-4-4.400z" fill="#86660c"/><path d="M2.400 12.500q1.200 2 3.100 2.500h5.500q1.900-.5 3.100-2.500z" fill="#4e3a04"/><path d="M1.500 8h13.500v2.300H1.500z" fill="#161000"/></svg></span><span class="t gr" id="L7" style="left:37.8px;transform:scaleX(0.9558)">Fujiwara Mokou</span></div>
<div class="r" style="top:128.6px">
<i class="bx" style="left:3.0px;top:3.5px"><b class="h"></b><b class="v"></b></i>
<span class="i" style="left:18.3px"><svg class="ic" width="16" height="16" viewBox="0 0 16 16"><path d="M1.500 1h13.500v2.600h-2.500l-1 3.400h-6.500l-1-3.400h-2.500z" fill="#7c5e0a"/><path d="M4.800 5.500h6.900l-.4 1.500h-6.100z" fill="#4e3a04"/><path d="M1.500 1h13.500v2.300H1.500z" fill="#161000"/><path d="M1.500 8h13.500v2.600q-.5 3.400-4 4.400h-5.500q-3.500-1-4-4.400z" fill="#86660c"/><path d="M2.400 12.500q1.200 2 3.100 2.500h5.500q1.900-.5 3.100-2.500z" fill="#4e3a04"/><path d="M1.500 8h13.500v2.300H1.500z" fill="#161000"/></svg></span><span class="t gr" id="L8" style="left:37.8px;transform:scaleX(0.9580)">Fujiwara Mokou Phoenix</span></div>
<div class="r" style="top:144.6px">
<i class="bx" style="left:3.0px;top:3.5px"><b class="h"></b></i>
<span class="i" style="left:18.3px"><svg class="ic" width="16" height="16" viewBox="0 0 16 16"><path d="M1.500 1h13.500v2.600h-2.500l-1 3.400h-6.500l-1-3.400h-2.500z" fill="#7c5e0a"/><path d="M4.800 5.500h6.900l-.4 1.500h-6.100z" fill="#4e3a04"/><path d="M1.500 1h13.500v2.300H1.500z" fill="#161000"/><path d="M1.500 8h13.500v2.600q-.5 3.400-4 4.400h-5.500q-3.500-1-4-4.400z" fill="#86660c"/><path d="M2.400 12.500q1.200 2 3.100 2.500h5.500q1.900-.5 3.100-2.500z" fill="#4e3a04"/><path d="M1.500 8h13.500v2.300H1.500z" fill="#161000"/></svg></span><span class="t gr" id="L9" style="left:37.8px;transform:scaleX(0.9628)">Sakata Gintoki</span></div>
<div class="r" style="top:160.6px">
<span class="i" style="left:37.3px"><svg class="ic" width="16" height="16" viewBox="0 0 16 16"><path d="M3.5 1.5h6l3.5 3.5v9.500h-9.500z" fill="#fff" stroke="#000" stroke-width="1.6"/><path d="M9.500 1.500v3.500h3.500" fill="none" stroke="#000" stroke-width="1.200"/></svg></span><span class="t bk" id="L10" style="left:56.8px;transform:scaleX(0.9611)">Add Skill Gintoki</span></div>
<div class="r" style="top:176.6px">
<span class="i" style="left:37.3px"><svg class="ic" width="16" height="16" viewBox="0 0 16 16"><path d="M1.500 1h13.500v2.600h-2.500l-1 3.400h-6.500l-1-3.400h-2.500z" fill="#7c5e0a"/><path d="M4.800 5.500h6.900l-.4 1.500h-6.100z" fill="#4e3a04"/><path d="M1.500 1h13.500v2.300H1.500z" fill="#161000"/><path d="M1.500 8h13.500v2.600q-.5 3.400-4 4.400h-5.500q-3.500-1-4-4.400z" fill="#86660c"/><path d="M2.400 12.500q1.200 2 3.100 2.500h5.500q1.900-.5 3.100-2.500z" fill="#4e3a04"/><path d="M1.500 8h13.500v2.300H1.500z" fill="#161000"/></svg></span><span class="t gr" id="L11" style="left:56.8px;transform:scaleX(0.9847)">Молоко</span></div>
<div class="r" style="top:192.6px">
<span class="i" style="left:37.3px"><svg class="ic" width="16" height="16" viewBox="0 0 16 16"><path d="M3.5 1.5h6l3.5 3.5v9.500h-9.500z" fill="#fff" stroke="#000" stroke-width="1.6"/><path d="M9.500 1.500v3.500h3.500" fill="none" stroke="#000" stroke-width="1.200"/></svg></span><span class="t bk" id="L12" style="left:56.8px;transform:scaleX(0.9755)">Sakata Gintoki Milk</span></div>
<div class="r" style="top:208.6px">
<span class="i" style="left:37.3px"><svg class="ic" width="16" height="16" viewBox="0 0 16 16"><path d="M3.5 1.5h6l3.5 3.5v9.500h-9.500z" fill="#fff" stroke="#a8a8a8" stroke-width="1.3"/><path d="M9.500 1.500v3.500h3.500" fill="none" stroke="#a8a8a8" stroke-width="1"/></svg></span><span class="t gy" id="L13" style="left:56.8px;transform:scaleX(0.9613)">Sakata Gintoki Milk Cast</span></div>
<div class="r" style="top:224.6px">
<span class="i" style="left:37.3px"><svg class="ic" width="16" height="16" viewBox="0 0 16 16"><path d="M3.5 1.5h6l3.5 3.5v9.500h-9.500z" fill="#fff" stroke="#a8a8a8" stroke-width="1.3"/><path d="M9.500 1.500v3.500h3.500" fill="none" stroke="#a8a8a8" stroke-width="1"/></svg></span><span class="t gy" id="L14" style="left:56.8px;transform:scaleX(0.9821)">Sakata Gintoki Milk Act</span></div>
<div class="r" style="top:240.6px">
<span class="i" style="left:37.3px"><svg class="ic" width="16" height="16" viewBox="0 0 16 16"><path d="M1.500 1h13.500v2.600h-2.500l-1 3.400h-6.500l-1-3.400h-2.500z" fill="#7c5e0a"/><path d="M4.800 5.500h6.900l-.4 1.500h-6.100z" fill="#4e3a04"/><path d="M1.500 1h13.500v2.300H1.500z" fill="#161000"/><path d="M1.500 8h13.500v2.600q-.5 3.400-4 4.400h-5.500q-3.500-1-4-4.400z" fill="#86660c"/><path d="M2.400 12.500q1.200 2 3.100 2.500h5.500q1.900-.5 3.100-2.500z" fill="#4e3a04"/><path d="M1.500 8h13.500v2.300H1.500z" fill="#161000"/></svg></span><span class="t gr" id="L15" style="left:56.8px;transform:scaleX(1.0538)">Козявки</span></div>
<div class="r" style="top:256.6px">
<span class="i" style="left:37.3px"><svg class="ic" width="16" height="16" viewBox="0 0 16 16"><path d="M3.5 1.5h6l3.5 3.5v9.500h-9.500z" fill="#fff" stroke="#000" stroke-width="1.6"/><path d="M9.500 1.500v3.500h3.500" fill="none" stroke="#000" stroke-width="1.200"/></svg></span><span class="t bk" id="L16" style="left:56.8px;transform:scaleX(0.9655)">Sakata Gintoki Explosive Snot</span></div>
<div class="r" style="top:272.6px">
<span class="i" style="left:37.3px"><svg class="ic" width="16" height="16" viewBox="0 0 16 16"><path d="M3.5 1.5h6l3.5 3.5v9.500h-9.500z" fill="#fff" stroke="#000" stroke-width="1.6"/><path d="M9.500 1.500v3.500h3.500" fill="none" stroke="#000" stroke-width="1.200"/></svg></span><span class="t bk" id="L17" style="left:56.8px;transform:scaleX(0.9660)">Sakata Gintoki Explosive Snot End</span></div>
<div class="r" style="top:288.6px">
<span class="i" style="left:37.3px"><svg class="ic" width="16" height="16" viewBox="0 0 16 16"><path d="M3.5 1.5h6l3.5 3.5v9.500h-9.500z" fill="#fff" stroke="#a8a8a8" stroke-width="1.3"/><path d="M9.500 1.500v3.500h3.500" fill="none" stroke="#a8a8a8" stroke-width="1"/></svg></span><span class="t gy" id="L18" style="left:56.8px;transform:scaleX(0.9598)">Sakata Gintoki Explosive Snot Cast</span></div>
<div class="r" style="top:304.6px">
<span class="i" style="left:37.3px"><svg class="ic" width="16" height="16" viewBox="0 0 16 16"><path d="M3.5 1.5h6l3.5 3.5v9.500h-9.500z" fill="#fff" stroke="#a8a8a8" stroke-width="1.3"/><path d="M9.500 1.500v3.500h3.500" fill="none" stroke="#a8a8a8" stroke-width="1"/></svg></span><span class="t gy" id="L19" style="left:56.8px;transform:scaleX(0.9739)">Sakata Gintoki Explosive Snot Act</span></div>
<div class="r" style="top:320.6px">
<span class="i" style="left:37.3px"><svg class="ic" width="16" height="16" viewBox="0 0 16 16"><path d="M1.500 1h13.500v2.600h-2.500l-1 3.400h-6.500l-1-3.400h-2.500z" fill="#7c5e0a"/><path d="M4.800 5.500h6.900l-.4 1.500h-6.100z" fill="#4e3a04"/><path d="M1.500 1h13.500v2.300H1.500z" fill="#161000"/><path d="M1.500 8h13.500v2.600q-.5 3.400-4 4.400h-5.500q-3.500-1-4-4.400z" fill="#86660c"/><path d="M2.400 12.500q1.200 2 3.100 2.500h5.500q1.900-.5 3.100-2.500z" fill="#4e3a04"/><path d="M1.500 8h13.500v2.300H1.500z" fill="#161000"/></svg></span><span class="t gr" id="L20" style="left:56.8px;transform:scaleX(0.9865)">Игрушка</span></div>
<div class="r" style="top:336.6px">
<span class="i" style="left:37.3px"><svg class="ic" width="16" height="16" viewBox="0 0 16 16"><path d="M3.5 1.5h6l3.5 3.5v9.500h-9.500z" fill="#fff" stroke="#000" stroke-width="1.6"/><path d="M9.500 1.500v3.500h3.500" fill="none" stroke="#000" stroke-width="1.200"/></svg></span><span class="t bk" id="L21" style="left:56.8px;transform:scaleX(0.9680)">Sakata Gintoki Justaway</span></div>
<div class="r" style="top:352.6px">
<span class="i" style="left:37.3px"><svg class="ic" width="16" height="16" viewBox="0 0 16 16"><path d="M3.5 1.5h6l3.5 3.5v9.500h-9.500z" fill="#fff" stroke="#a8a8a8" stroke-width="1.3"/><path d="M9.500 1.500v3.500h3.500" fill="none" stroke="#a8a8a8" stroke-width="1"/></svg></span><span class="t gy" id="L22" style="left:56.8px;transform:scaleX(0.9576)">Sakata Gintoki Justaway Cast</span></div>
<div class="r" style="top:368.6px">
<span class="i" style="left:37.3px"><svg class="ic" width="16" height="16" viewBox="0 0 16 16"><path d="M3.5 1.5h6l3.5 3.5v9.500h-9.500z" fill="#fff" stroke="#a8a8a8" stroke-width="1.3"/><path d="M9.500 1.500v3.500h3.500" fill="none" stroke="#a8a8a8" stroke-width="1"/></svg></span><span class="t gy" id="L23" style="left:56.8px;transform:scaleX(0.9743)">Sakata Gintoki Justaway Act</span></div>
<div class="r" style="top:384.6px">
<span class="i" style="left:37.3px"><svg class="ic" width="16" height="16" viewBox="0 0 16 16"><path d="M1.500 1h13.500v2.600h-2.500l-1 3.400h-6.500l-1-3.400h-2.500z" fill="#7c5e0a"/><path d="M4.800 5.500h6.900l-.4 1.500h-6.100z" fill="#4e3a04"/><path d="M1.500 1h13.500v2.300H1.500z" fill="#161000"/><path d="M1.500 8h13.500v2.600q-.5 3.400-4 4.400h-5.500q-3.500-1-4-4.400z" fill="#86660c"/><path d="M2.400 12.500q1.200 2 3.100 2.500h5.500q1.900-.5 3.100-2.500z" fill="#4e3a04"/><path d="M1.500 8h13.500v2.300H1.500z" fill="#161000"/></svg></span><span class="t gr" id="L24" style="left:56.8px;transform:scaleX(0.9928)">Камехамеха</span></div>
<div class="r" style="top:400.6px">
<span class="i" style="left:37.3px"><svg class="ic" width="16" height="16" viewBox="0 0 16 16"><path d="M3.5 1.5h6l3.5 3.5v9.500h-9.500z" fill="#fff" stroke="#000" stroke-width="1.6"/><path d="M9.500 1.500v3.500h3.500" fill="none" stroke="#000" stroke-width="1.200"/></svg></span><span class="t bk" id="L25" style="left:56.8px;transform:scaleX(0.9549)">Sakata Gintoki Kamehameha</span></div>
<div class="r" style="top:416.6px">
<span class="i" style="left:37.3px"><svg class="ic" width="16" height="16" viewBox="0 0 16 16"><path d="M3.5 1.5h6l3.5 3.5v9.500h-9.500z" fill="#f4f4f4" stroke="#999" stroke-width="1.2"/><path d="M3.500 8l9.500 5v2h-9.500z" fill="#b01818"/></svg></span><span class="t bk sel" id="L26" style="left:56.8px;transform:scaleX(0.9535)">Sakata Gintoki Kamehameha Cast</span></div>
<div class="r" style="top:432.6px">
<span class="i" style="left:37.3px"><svg class="ic" width="16" height="16" viewBox="0 0 16 16"><path d="M3.5 1.5h6l3.5 3.5v9.500h-9.500z" fill="#fff" stroke="#a8a8a8" stroke-width="1.3"/><path d="M9.500 1.500v3.500h3.500" fill="none" stroke="#a8a8a8" stroke-width="1"/></svg></span><span class="t gy" id="L27" style="left:56.8px;transform:scaleX(0.9686)">Sakata Gintoki Kamehameha Act</span></div>
<div class="r" style="top:448.6px">
<span class="i" style="left:37.3px"><svg class="ic" width="16" height="16" viewBox="0 0 16 16"><path d="M3.5 1.5h6l3.5 3.5v9.500h-9.500z" fill="#fff" stroke="#000" stroke-width="1.6"/><path d="M9.500 1.500v3.500h3.500" fill="none" stroke="#000" stroke-width="1.200"/></svg></span><span class="t bk" id="L28" style="left:56.8px;transform:scaleX(0.9606)">Sakata Gintoki Kamehameha End</span></div>
<div class="r" style="top:464.6px">
<span class="i" style="left:37.3px"><svg class="ic" width="16" height="16" viewBox="0 0 16 16"><path d="M1.500 1h13.500v2.600h-2.500l-1 3.400h-6.500l-1-3.400h-2.500z" fill="#7c5e0a"/><path d="M4.800 5.500h6.900l-.4 1.500h-6.100z" fill="#4e3a04"/><path d="M1.500 1h13.500v2.300H1.500z" fill="#161000"/><path d="M1.500 8h13.500v2.600q-.5 3.400-4 4.400h-5.500q-3.500-1-4-4.400z" fill="#86660c"/><path d="M2.400 12.500q1.200 2 3.100 2.500h5.500q1.900-.5 3.100-2.500z" fill="#4e3a04"/><path d="M1.500 8h13.500v2.300H1.500z" fill="#161000"/></svg></span><span class="t gr" id="L29" style="left:56.8px;transform:scaleX(0.9938)">Пни Банку</span></div>
<div class="r" style="top:480.6px">
<span class="i" style="left:37.3px"><svg class="ic" width="16" height="16" viewBox="0 0 16 16"><path d="M3.5 1.5h6l3.5 3.5v9.500h-9.500z" fill="#fff" stroke="#000" stroke-width="1.6"/><path d="M9.500 1.500v3.500h3.500" fill="none" stroke="#000" stroke-width="1.200"/></svg></span><span class="t bk" id="L30" style="left:56.8px;transform:scaleX(0.9762)">Sakata Gintoki Kick</span></div>
<div class="r" style="top:496.6px">
<span class="i" style="left:37.3px"><svg class="ic" width="16" height="16" viewBox="0 0 16 16"><path d="M3.5 1.5h6l3.5 3.5v9.500h-9.500z" fill="#fff" stroke="#a8a8a8" stroke-width="1.3"/><path d="M9.500 1.500v3.500h3.500" fill="none" stroke="#a8a8a8" stroke-width="1"/></svg></span><span class="t gy" id="L31" style="left:56.8px;transform:scaleX(0.9683)">Sakata Gintoki Kick Cast</span></div>
<div class="r" style="top:512.6px">
<span class="i" style="left:37.3px"><svg class="ic" width="16" height="16" viewBox="0 0 16 16"><path d="M3.5 1.5h6l3.5 3.5v9.500h-9.500z" fill="#fff" stroke="#a8a8a8" stroke-width="1.3"/><path d="M9.500 1.500v3.500h3.500" fill="none" stroke="#a8a8a8" stroke-width="1"/></svg></span><span class="t gy" id="L32" style="left:56.8px;transform:scaleX(0.9812)">Sakata Gintoki Kick Act</span></div>
<div class="r" style="top:528.6px">
<span class="i" style="left:37.3px"><svg class="ic" width="16" height="16" viewBox="0 0 16 16"><path d="M3.5 1.5h6l3.5 3.5v9.500h-9.500z" fill="#fff" stroke="#000" stroke-width="1.6"/><path d="M9.500 1.500v3.500h3.500" fill="none" stroke="#000" stroke-width="1.200"/></svg></span><span class="t bk" id="L33" style="left:56.8px;transform:scaleX(0.9787)">Sakata Gintoki Kick End</span></div>
<div class="r" style="top:544.6px">
<span class="i" style="left:37.3px"><svg class="ic" width="16" height="16" viewBox="0 0 16 16"><path d="M3.5 1.5h6l3.5 3.5v9.500h-9.500z" fill="#fff" stroke="#a8a8a8" stroke-width="1.3"/><path d="M9.500 1.500v3.500h3.500" fill="none" stroke="#a8a8a8" stroke-width="1"/></svg></span><span class="t gy" id="L34" style="left:56.8px;transform:scaleX(0.9825)">Sakata Gintoki Kick End Act</span></div>
<div class="r" style="top:560.6px">
<span class="i" style="left:37.3px"><svg class="ic" width="16" height="16" viewBox="0 0 16 16"><path d="M1.500 1h13.500v2.600h-2.500l-1 3.400h-6.500l-1-3.400h-2.500z" fill="#7c5e0a"/><path d="M4.800 5.500h6.900l-.4 1.500h-6.100z" fill="#4e3a04"/><path d="M1.500 1h13.500v2.300H1.500z" fill="#161000"/><path d="M1.500 8h13.500v2.600q-.5 3.400-4 4.400h-5.500q-3.500-1-4-4.400z" fill="#86660c"/><path d="M2.400 12.500q1.200 2 3.100 2.500h5.500q1.900-.5 3.100-2.500z" fill="#4e3a04"/><path d="M1.500 8h13.500v2.300H1.500z" fill="#161000"/></svg></span><span class="t gr" id="L35" style="left:56.8px;transform:scaleX(0.9843)">Мопед</span></div>
<div class="r" style="top:576.6px">
<span class="i" style="left:37.3px"><svg class="ic" width="16" height="16" viewBox="0 0 16 16"><path d="M3.5 1.5h6l3.5 3.5v9.500h-9.500z" fill="#fff" stroke="#000" stroke-width="1.6"/><path d="M9.500 1.500v3.500h3.500" fill="none" stroke="#000" stroke-width="1.200"/></svg></span><span class="t bk" id="L36" style="left:56.8px;transform:scaleX(0.9687)">Sakata Gintoki Modep</span></div>
<div class="r" style="top:592.6px">
<span class="i" style="left:37.3px"><svg class="ic" width="16" height="16" viewBox="0 0 16 16"><path d="M3.5 1.5h6l3.5 3.5v9.500h-9.500z" fill="#fff" stroke="#a8a8a8" stroke-width="1.3"/><path d="M9.500 1.500v3.500h3.500" fill="none" stroke="#a8a8a8" stroke-width="1"/></svg></span><span class="t gy" id="L37" style="left:56.8px;transform:scaleX(0.9631)">Sakata Gintoki Modep Cast</span></div>
<div class="r" style="top:608.6px">
<span class="i" style="left:37.3px"><svg class="ic" width="16" height="16" viewBox="0 0 16 16"><path d="M3.5 1.5h6l3.5 3.5v9.500h-9.500z" fill="#fff" stroke="#a8a8a8" stroke-width="1.3"/><path d="M9.500 1.500v3.500h3.500" fill="none" stroke="#a8a8a8" stroke-width="1"/></svg></span><span class="t gy" id="L38" style="left:56.8px;transform:scaleX(0.9793)">Sakata Gintoki Modep Act</span></div>
<div class="r" style="top:624.6px">
<span class="i" style="left:37.3px"><svg class="ic" width="16" height="16" viewBox="0 0 16 16"><path d="M3.5 1.5h6l3.5 3.5v9.500h-9.500z" fill="#fff" stroke="#a8a8a8" stroke-width="1.3"/><path d="M9.500 1.500v3.500h3.500" fill="none" stroke="#a8a8a8" stroke-width="1"/></svg></span><span class="t gy" id="L39" style="left:56.8px;transform:scaleX(0.9676)">Sakata Gintoki Modep End</span></div>
<div class="r" style="top:640.6px">
<span class="i" style="left:37.3px"><svg class="ic" width="16" height="16" viewBox="0 0 16 16"><path d="M3.5 1.5h6l3.5 3.5v9.500h-9.500z" fill="#fff" stroke="#a8a8a8" stroke-width="1.3"/><path d="M9.500 1.500v3.500h3.500" fill="none" stroke="#a8a8a8" stroke-width="1"/></svg></span><span class="t gy" id="L40" style="left:56.8px;transform:scaleX(0.9670)">Sakata Gintoki Modep End Cast</span></div>
<div class="r" style="top:656.6px">
<span class="i" style="left:37.3px"><svg class="ic" width="16" height="16" viewBox="0 0 16 16"><path d="M3.5 1.5h6l3.5 3.5v9.500h-9.500z" fill="#fff" stroke="#000" stroke-width="1.6"/><path d="M9.500 1.500v3.500h3.500" fill="none" stroke="#000" stroke-width="1.200"/></svg></span><span class="t bk" id="L41" style="left:56.8px;transform:scaleX(0.9676)">Sakata Gintoki Modep Orden</span></div>
<div class="r" style="top:672.6px">
<span class="i" style="left:37.3px"><svg class="ic" width="16" height="16" viewBox="0 0 16 16"><path d="M3.5 1.5h6l3.5 3.5v9.500h-9.500z" fill="#fff" stroke="#000" stroke-width="1.6"/><path d="M9.500 1.500v3.500h3.500" fill="none" stroke="#000" stroke-width="1.200"/></svg></span><span class="t bk" id="L42" style="left:56.8px;transform:scaleX(0.9678)">Sakata Gintoki Modep Orden End</span></div>
<div class="r" style="top:688.6px">
<span class="i" style="left:37.3px"><svg class="ic" width="16" height="16" viewBox="0 0 16 16"><path d="M3.5 1.5h6l3.5 3.5v9.500h-9.500z" fill="#fff" stroke="#a8a8a8" stroke-width="1.3"/><path d="M9.500 1.500v3.500h3.500" fill="none" stroke="#a8a8a8" stroke-width="1"/></svg></span><span class="t gy" id="L43" style="left:56.8px;transform:scaleX(0.9606)">Sakata Gintoki Modep Orden End Cast</span></div>
<div class="r" style="top:704.6px">
<i class="bx" style="left:3.0px;top:3.5px"><b class="h"></b><b class="v"></b></i>
<span class="i" style="left:18.3px"><svg class="ic" width="16" height="16" viewBox="0 0 16 16"><path d="M1 3.500h5l1.500 1.500h7.500v9.500h-14z" fill="#f4e27a" stroke="#8a7a20" stroke-width="1"/><path d="M1.500 6h13" stroke="#fff8c0" stroke-width="1"/></svg></span><span class="t bk" id="L44" style="left:37.8px;transform:scaleX(0.9910)">Tanya fon Degurechafu</span></div>
<div class="r" style="top:720.6px">
<i class="bx" style="left:3.0px;top:3.5px"><b class="h"></b><b class="v"></b></i>
<span class="i" style="left:18.3px"><svg class="ic" width="16" height="16" viewBox="0 0 16 16"><path d="M1 3.500h5l1.500 1.500h7.500v9.500h-14z" fill="#f4e27a" stroke="#8a7a20" stroke-width="1"/><path d="M1.500 6h13" stroke="#fff8c0" stroke-width="1"/></svg></span><span class="t bk" id="L45" style="left:37.8px;transform:scaleX(0.8916)">Item</span></div>
<div class="r" style="top:736.6px">
<i class="bx" style="left:3.0px;top:3.5px"><b class="h"></b><b class="v"></b></i>
<span class="i" style="left:18.3px"><svg class="ic" width="16" height="16" viewBox="0 0 16 16"><path d="M1 3.500h5l1.500 1.500h7.500v9.500h-14z" fill="#f4e27a" stroke="#8a7a20" stroke-width="1"/><path d="M1.500 6h13" stroke="#fff8c0" stroke-width="1"/></svg></span><span class="t bk" id="L46" style="left:37.8px;transform:scaleX(0.8500)">Dead Dummy</span></div>
<div class="r" style="top:752.6px">
<i class="bx" style="left:3.0px;top:3.5px"><b class="h"></b><b class="v"></b></i>
<span class="i" style="left:18.3px"><svg class="ic" width="16" height="16" viewBox="0 0 16 16"><path d="M1 3.500h5l1.500 1.500h7.500v9.500h-14z" fill="#f4e27a" stroke="#8a7a20" stroke-width="1"/><path d="M1.500 6h13" stroke="#fff8c0" stroke-width="1"/></svg></span><span class="t bk" id="L47" style="left:37.8px;transform:scaleX(0.8948)">Shop</span></div>
   <div class="a sb" style="right:0;top:0;width:17px;height:767px">
     <i class="a arr" style="left:4.500px;top:6px;border-width:3.500px;border-bottom:4px solid #606060;border-top:0"></i>
     <i class="a arr" style="left:4.500px;bottom:7px;border-width:3.500px;border-top:4px solid #606060;border-bottom:0"></i>
     <div class="a thumb" style="left:1px;top:134px;width:15px;height:613px"></div>
     <div class="a" style="left:5px;top:433px;width:7px;height:7px;background:repeating-linear-gradient(180deg,#666 0,#666 1px,transparent 1px,transparent 2px)"></div>
   </div>
  </div>
  <!-- splitter -->
  <div class="a" style="left:294px;top:47px;width:8.500px;height:771px;background:#f6f9fd;border-left:1px solid #b8bcc4"></div>
  <!-- right panel -->
  <div class="a" style="left:302px;top:49px;width:13px;height:13px;border:1px solid #8e8f8f;background:#fff"><svg class="a" style="left:1px;top:1px" width="9" height="9" viewBox="0 0 9 9"><path d="M1 4l2.500 3L8 1" stroke="#222" stroke-width="1.800" fill="none"/></svg></div>
  <div class="a lbl" style="left:320px;top:49px;line-height:13px">Включен</div>
  <div class="a" style="left:424px;top:49px;width:13px;height:13px;border:1px solid #8e8f8f;background:#fff"></div>
  <div class="a lbl" style="left:441px;top:49px;line-height:13px">Изначально включен</div>
  <div class="a lbl" style="left:303px;top:68px;line-height:13px">Комментарий к триггеру:</div>
  <div class="a" style="left:302px;top:87px;width:990px;height:36px;border:1px solid;border-color:#6e6e6e #b4b4b4 #b4b4b4 #6e6e6e;background:#fff"></div>
  <i class="a arr" style="left:1297px;top:93px;border-bottom:4px solid #8a8a8a;border-top:0"></i><i class="a arr" style="left:1297px;top:112px;border-top:4px solid #8a8a8a;border-bottom:0"></i>
  <div class="a" style="left:302px;top:124px;width:1006px;height:12px;background:#f5f8fc;border-right:1px solid #6a6a6a"></div><div class="a" style="left:504px;top:135px;width:804px;height:1px;background:#6a6a6a"></div>
  <div class="a lbl" style="left:302px;top:133px;line-height:13px"><span style="font-size:8px;vertical-align:3px">"</span>Функции триггера:</div>
  <div class="a tree" id="ft" style="left:302px;top:153px;width:1006px;height:665px">
   <i class="vl" style="left:-17.0px;top:0.1px;height:16px"></i><i class="vl" style="left:2.0px;top:0.1px;height:16px"></i><i class="hl_" style="left:2.0px;top:8.1px;width:10px"></i><i class="vl" style="left:-17.0px;top:16.1px;height:16px"></i><i class="vl" style="left:2.0px;top:16.1px;height:16px"></i><i class="hl_" style="left:2.0px;top:24.1px;width:10px"></i><i class="vl" style="left:-17.0px;top:32.1px;height:16px"></i><i class="vl" style="left:2.0px;top:32.1px;height:16px"></i><i class="hl_" style="left:2.0px;top:40.1px;width:10px"></i><i class="vl" style="left:-17.0px;top:48.1px;height:16px"></i><i class="vl" style="left:2.0px;top:48.1px;height:8px"></i><i class="hl_" style="left:2.0px;top:56.1px;width:10px"></i><i class="vl" style="left:-17.0px;top:64.1px;height:16px"></i><i class="hl_" style="left:-17.0px;top:72.1px;width:10px"></i><i class="vl" style="left:-17.0px;top:80.1px;height:16px"></i><i class="vl" style="left:2.0px;top:80.1px;height:8px"></i><i class="hl_" style="left:2.0px;top:88.1px;width:10px"></i><i class="vl" style="left:-17.0px;top:96.1px;height:16px"></i><i class="vl" style="left:21.0px;top:96.1px;height:16px"></i><i class="hl_" style="left:21.0px;top:104.1px;width:10px"></i><i class="vl" style="left:-17.0px;top:112.1px;height:16px"></i><i class="vl" style="left:21.0px;top:112.1px;height:16px"></i><i class="vl" style="left:40.0px;top:112.1px;height:8px"></i><i class="hl_" style="left:40.0px;top:120.1px;width:10px"></i><i class="vl" style="left:-17.0px;top:128.1px;height:16px"></i><i class="vl" style="left:21.0px;top:128.1px;height:16px"></i><i class="vl" style="left:59.0px;top:128.1px;height:8px"></i><i class="hl_" style="left:59.0px;top:136.1px;width:10px"></i><i class="vl" style="left:-17.0px;top:144.1px;height:16px"></i><i class="vl" style="left:21.0px;top:144.1px;height:16px"></i><i class="vl" style="left:78.0px;top:144.1px;height:16px"></i><i class="hl_" style="left:78.0px;top:152.1px;width:10px"></i><i class="vl" style="left:-17.0px;top:160.1px;height:16px"></i><i class="vl" style="left:21.0px;top:160.1px;height:16px"></i><i class="vl" style="left:78.0px;top:160.1px;height:16px"></i><i class="hl_" style="left:78.0px;top:168.1px;width:10px"></i><i class="vl" style="left:-17.0px;top:176.1px;height:16px"></i><i class="vl" style="left:21.0px;top:176.1px;height:16px"></i><i class="vl" style="left:78.0px;top:176.1px;height:8px"></i><i class="hl_" style="left:78.0px;top:184.1px;width:10px"></i><i class="vl" style="left:-17.0px;top:192.1px;height:16px"></i><i class="vl" style="left:21.0px;top:192.1px;height:16px"></i><i class="hl_" style="left:21.0px;top:200.1px;width:10px"></i><i class="vl" style="left:-17.0px;top:208.1px;height:16px"></i><i class="vl" style="left:21.0px;top:208.1px;height:16px"></i><i class="vl" style="left:40.0px;top:208.1px;height:16px"></i><i class="hl_" style="left:40.0px;top:216.1px;width:10px"></i><i class="vl" style="left:-17.0px;top:224.1px;height:16px"></i><i class="vl" style="left:21.0px;top:224.1px;height:16px"></i><i class="vl" style="left:40.0px;top:224.1px;height:16px"></i><i class="hl_" style="left:40.0px;top:232.1px;width:10px"></i><i class="vl" style="left:-17.0px;top:240.1px;height:16px"></i><i class="vl" style="left:21.0px;top:240.1px;height:16px"></i><i class="vl" style="left:40.0px;top:240.1px;height:8px"></i><i class="hl_" style="left:40.0px;top:248.1px;width:10px"></i><i class="vl" style="left:-17.0px;top:256.1px;height:16px"></i><i class="vl" style="left:21.0px;top:256.1px;height:8px"></i><i class="hl_" style="left:21.0px;top:264.1px;width:10px"></i><i class="vl" style="left:-17.0px;top:272.1px;height:16px"></i><i class="vl" style="left:40.0px;top:272.1px;height:8px"></i><i class="hl_" style="left:40.0px;top:280.1px;width:10px"></i><i class="vl" style="left:-17.0px;top:288.1px;height:16px"></i><i class="vl" style="left:59.0px;top:288.1px;height:16px"></i><i class="hl_" style="left:59.0px;top:296.1px;width:10px"></i><i class="vl" style="left:-17.0px;top:304.1px;height:16px"></i><i class="vl" style="left:59.0px;top:304.1px;height:16px"></i><i class="vl" style="left:78.0px;top:304.1px;height:8px"></i><i class="hl_" style="left:78.0px;top:312.1px;width:10px"></i><i class="vl" style="left:-17.0px;top:320.1px;height:16px"></i><i class="vl" style="left:59.0px;top:320.1px;height:16px"></i><i class="hl_" style="left:59.0px;top:328.1px;width:10px"></i><i class="vl" style="left:-17.0px;top:336.1px;height:16px"></i><i class="vl" style="left:59.0px;top:336.1px;height:16px"></i><i class="vl" style="left:78.0px;top:336.1px;height:16px"></i><i class="hl_" style="left:78.0px;top:344.1px;width:10px"></i><i class="vl" style="left:-17.0px;top:352.1px;height:16px"></i><i class="vl" style="left:59.0px;top:352.1px;height:16px"></i><i class="vl" style="left:78.0px;top:352.1px;height:16px"></i><i class="hl_" style="left:78.0px;top:360.1px;width:10px"></i><i class="vl" style="left:-17.0px;top:368.1px;height:16px"></i><i class="vl" style="left:59.0px;top:368.1px;height:16px"></i><i class="vl" style="left:78.0px;top:368.1px;height:16px"></i><i class="hl_" style="left:78.0px;top:376.1px;width:10px"></i><i class="vl" style="left:-17.0px;top:384.1px;height:16px"></i><i class="vl" style="left:59.0px;top:384.1px;height:16px"></i><i class="vl" style="left:78.0px;top:384.1px;height:16px"></i><i class="hl_" style="left:78.0px;top:392.1px;width:10px"></i><i class="vl" style="left:-17.0px;top:400.1px;height:16px"></i><i class="vl" style="left:59.0px;top:400.1px;height:16px"></i><i class="vl" style="left:78.0px;top:400.1px;height:16px"></i><i class="hl_" style="left:78.0px;top:408.1px;width:10px"></i><i class="vl" style="left:-17.0px;top:416.1px;height:16px"></i><i class="vl" style="left:59.0px;top:416.1px;height:16px"></i><i class="vl" style="left:78.0px;top:416.1px;height:16px"></i><i class="hl_" style="left:78.0px;top:424.1px;width:10px"></i><i class="vl" style="left:-17.0px;top:432.1px;height:16px"></i><i class="vl" style="left:59.0px;top:432.1px;height:16px"></i><i class="vl" style="left:78.0px;top:432.1px;height:16px"></i><i class="hl_" style="left:78.0px;top:440.1px;width:10px"></i><i class="vl" style="left:-17.0px;top:448.1px;height:16px"></i><i class="vl" style="left:59.0px;top:448.1px;height:16px"></i><i class="vl" style="left:78.0px;top:448.1px;height:16px"></i><i class="hl_" style="left:78.0px;top:456.1px;width:10px"></i><i class="vl" style="left:-17.0px;top:464.1px;height:16px"></i><i class="vl" style="left:59.0px;top:464.1px;height:16px"></i><i class="vl" style="left:78.0px;top:464.1px;height:16px"></i><i class="hl_" style="left:78.0px;top:472.1px;width:10px"></i><i class="vl" style="left:-17.0px;top:480.1px;height:16px"></i><i class="vl" style="left:59.0px;top:480.1px;height:16px"></i><i class="vl" style="left:78.0px;top:480.1px;height:16px"></i><i class="hl_" style="left:78.0px;top:488.1px;width:10px"></i><i class="vl" style="left:-17.0px;top:496.1px;height:16px"></i><i class="vl" style="left:59.0px;top:496.1px;height:16px"></i><i class="vl" style="left:78.0px;top:496.1px;height:16px"></i><i class="hl_" style="left:78.0px;top:504.1px;width:10px"></i><i class="vl" style="left:-17.0px;top:512.1px;height:16px"></i><i class="vl" style="left:59.0px;top:512.1px;height:16px"></i><i class="vl" style="left:78.0px;top:512.1px;height:16px"></i><i class="hl_" style="left:78.0px;top:520.1px;width:10px"></i><i class="vl" style="left:-17.0px;top:528.1px;height:16px"></i><i class="vl" style="left:59.0px;top:528.1px;height:16px"></i><i class="vl" style="left:78.0px;top:528.1px;height:16px"></i><i class="hl_" style="left:78.0px;top:536.1px;width:10px"></i><i class="vl" style="left:-17.0px;top:544.1px;height:16px"></i><i class="vl" style="left:59.0px;top:544.1px;height:16px"></i><i class="vl" style="left:78.0px;top:544.1px;height:16px"></i><i class="hl_" style="left:78.0px;top:552.1px;width:10px"></i><i class="vl" style="left:-17.0px;top:560.1px;height:16px"></i><i class="vl" style="left:59.0px;top:560.1px;height:16px"></i><i class="vl" style="left:78.0px;top:560.1px;height:16px"></i><i class="hl_" style="left:78.0px;top:568.1px;width:10px"></i><i class="vl" style="left:-17.0px;top:576.1px;height:16px"></i><i class="vl" style="left:59.0px;top:576.1px;height:16px"></i><i class="vl" style="left:78.0px;top:576.1px;height:8px"></i><i class="hl_" style="left:78.0px;top:584.1px;width:10px"></i><i class="vl" style="left:-17.0px;top:592.1px;height:16px"></i><i class="vl" style="left:59.0px;top:592.1px;height:8px"></i><i class="hl_" style="left:59.0px;top:600.1px;width:10px"></i><i class="vl" style="left:-17.0px;top:608.1px;height:16px"></i><i class="vl" style="left:78.0px;top:608.1px;height:16px"></i><i class="hl_" style="left:78.0px;top:616.1px;width:10px"></i><i class="vl" style="left:-17.0px;top:624.1px;height:16px"></i><i class="vl" style="left:78.0px;top:624.1px;height:8px"></i><i class="hl_" style="left:78.0px;top:632.1px;width:10px"></i>
<div class="r" style="top:0.1px">
<span class="i" style="left:11.2px"><svg class="ic" width="16" height="16" viewBox="0 0 16 16"><rect x=".5" y=".5" width="15" height="15" fill="#000" stroke="#9a7400" stroke-width="1"/><path d="M2 3.800l7 8.400M9 3.800l-7 8.400" stroke="#22d422" stroke-width="1.900" fill="none"/><path d="M8.500 6.500h5.500M8.500 9.500h5.500" stroke="#22d422" stroke-width="1.600"/></svg></span><span class="t " id="F0" style="left:31.5px;transform:scaleX(0.9666)">Установить GintokiKamehamehaCaster = AizenKyokoSuigetsuClone[1]</span></div>
<div class="r" style="top:16.1px">
<span class="i" style="left:11.2px"><svg class="ic" width="16" height="16" viewBox="0 0 16 16"><rect x=".5" y=".5" width="15" height="15" fill="#000" stroke="#9a7400" stroke-width="1"/><circle cx="8" cy="3.800" r="1.600" fill="#e8c010"/><path d="M3 6.500h10M8 5.500v5M8 10l-2.200 4.500M8 10l2.200 4.500" stroke="#e8c010" stroke-width="1.500" fill="none"/><path d="M6.500 6.500h3v4h-3z" fill="#c8a008"/></svg></span><span class="t " id="F1" style="left:31.5px;transform:scaleX(0.9636)">Боевая единица - Пауза GintokiKamehamehaCaster</span></div>
<div class="r" style="top:32.1px">
<span class="i" style="left:11.2px"><svg class="ic" width="16" height="16" viewBox="0 0 16 16"><rect x=".5" y=".5" width="15" height="15" fill="#000" stroke="#9a7400" stroke-width="1"/><circle cx="5.500" cy="5.500" r="3.300" fill="#a88400"/><circle cx="8" cy="8" r="3" fill="#c8a000"/><circle cx="10.800" cy="10.800" r="3.600" fill="#ffe400"/><circle cx="10" cy="10" r="1.200" fill="#fff8a0"/></svg></span><span class="t " id="F2" style="left:31.5px;transform:scaleX(0.9795)">Анимация - Изменить Скорость анимации GintokiKamehamehaCaster на 70.00% от начально скорости</span></div>
<div class="r" style="top:48.1px">
<span class="i" style="left:11.2px"><svg class="ic" width="16" height="16" viewBox="0 0 16 16"><rect x=".5" y=".5" width="15" height="15" fill="#000" stroke="#9a7400" stroke-width="1"/><circle cx="5.500" cy="5.500" r="3.300" fill="#a88400"/><circle cx="8" cy="8" r="3" fill="#c8a000"/><circle cx="10.800" cy="10.800" r="3.600" fill="#ffe400"/><circle cx="10" cy="10" r="1.200" fill="#fff8a0"/></svg></span><span class="t " id="F3" style="left:31.5px;transform:scaleX(0.9638)">Анимация - Воспроизводить анимацию GintokiKamehamehaCaster spell portrait</span></div>
<div class="r" style="top:64.1px">
<span class="i" style="left:-7.8px"><svg class="ic" width="16" height="16" viewBox="0 0 16 16"><path d="M2 8.500h12v6.500H2z" fill="#0c0c0c"/><path d="M2 10.500h12" stroke="#555" stroke-width=".8"/><path d="M2.500 8L12 2.500l1.300 2.300L3.800 10z" fill="#1a1a1a"/><path d="M5 6.400l1.500-.9M8 4.700l1.500-.9M10.800 3.100l1.300-.7" stroke="#cfcfcf" stroke-width="1.300"/></svg></span><span class="t " id="F4" style="left:12.5px;transform:scaleX(0.9829)">Иначе - Действия</span></div>
<div class="r" style="top:80.1px">
<i class="bx" style="left:-2.5px;top:3.5px"><b class="h"></b></i>
<span class="i" style="left:11.2px"><svg class="ic" width="16" height="16" viewBox="0 0 16 16"><rect x=".5" y=".5" width="15" height="15" fill="#000" stroke="#9a7400" stroke-width="1"/><path d="M4.800 6q0-3.200 3.200-3.200t3.200 3q0 1.700-3 2.700v1.500" stroke="#28d828" stroke-width="2.300" fill="none"/><rect x="6.900" y="11.500" width="2.500" height="2.500" fill="#28d828"/></svg></span><span class="t " id="F5" style="left:31.5px;transform:scaleX(0.9894)">Если (все условия истинны) тогда (запуск операции) инач<u>_</u><sup>L</sup></span></div>
<div class="r" style="top:96.1px">
<i class="bx" style="left:16.5px;top:3.5px"><b class="h"></b></i>
<span class="i" style="left:30.2px"><svg class="ic" width="16" height="16" viewBox="0 0 16 16"><path d="M3 1h8l3 3v11H3z" fill="#fff" stroke="#222" stroke-width="1.2"/><path d="M1 9h6V6.5l5 4-5 4V12H1z" fill="#1aa51a" stroke="#0a5a0a" stroke-width=".8"/></svg></span><span class="t " id="F6" style="left:50.5px;transform:scaleX(0.8500)">Если - Условия</span></div>
<div class="r" style="top:112.1px">
<i class="bx" style="left:35.5px;top:3.5px"><b class="h"></b></i>
<span class="i" style="left:49.2px"><svg class="ic" width="16" height="16" viewBox="0 0 16 16"><rect x=".5" y=".5" width="15" height="15" fill="#000" stroke="#9a7400" stroke-width="1"/><path d="M4.800 6q0-3.200 3.200-3.200t3.200 3q0 1.700-3 2.700v1.500" stroke="#28d828" stroke-width="2.300" fill="none"/><rect x="6.900" y="11.500" width="2.500" height="2.500" fill="#28d828"/></svg></span><span class="t " id="F7" style="left:69.5px;transform:scaleX(0.9878)">ИЛИ - любое из условий истинно</span></div>
<div class="r" style="top:128.1px">
<i class="bx" style="left:54.5px;top:3.5px"><b class="h"></b></i>
<span class="i" style="left:68.2px"><svg class="ic" width="16" height="16" viewBox="0 0 16 16"><path d="M3 1h8l3 3v11H3z" fill="#fff" stroke="#222" stroke-width="1.2"/><path d="M1 9h6V6.5l5 4-5 4V12H1z" fill="#1aa51a" stroke="#0a5a0a" stroke-width=".8"/></svg></span><span class="t " id="F8" style="left:88.5px;transform:scaleX(1.0005)">Условия</span></div>
<div class="r" style="top:144.1px">
<span class="i" style="left:87.2px"><svg class="ic" width="16" height="16" viewBox="0 0 16 16"><rect x=".5" y=".5" width="15" height="15" fill="#000" stroke="#9a7400" stroke-width="1"/><path d="M4.800 6q0-3.200 3.200-3.200t3.200 3q0 1.700-3 2.700v1.500" stroke="#28d828" stroke-width="2.300" fill="none"/><rect x="6.900" y="11.500" width="2.500" height="2.500" fill="#28d828"/></svg></span><span class="t " id="F9" style="left:107.5px;transform:scaleX(0.9680)">(GintokiKamehamehaCaster имеет специальное Stun (Negative)) равно Да</span></div>
<div class="r" style="top:160.1px">
<span class="i" style="left:87.2px"><svg class="ic" width="16" height="16" viewBox="0 0 16 16"><rect x=".5" y=".5" width="15" height="15" fill="#000" stroke="#9a7400" stroke-width="1"/><path d="M4.800 6q0-3.200 3.200-3.200t3.200 3q0 1.700-3 2.700v1.500" stroke="#28d828" stroke-width="2.300" fill="none"/><rect x="6.900" y="11.500" width="2.500" height="2.500" fill="#28d828"/></svg></span><span class="t " id="F10" style="left:107.5px;transform:scaleX(0.9638)">(GintokiKamehamehaCaster приостановлен) равно Нет</span></div>
<div class="r" style="top:176.1px">
<span class="i" style="left:87.2px"><svg class="ic" width="16" height="16" viewBox="0 0 16 16"><rect x=".5" y=".5" width="15" height="15" fill="#000" stroke="#9a7400" stroke-width="1"/><path d="M4.800 6q0-3.200 3.200-3.200t3.200 3q0 1.700-3 2.700v1.500" stroke="#28d828" stroke-width="2.300" fill="none"/><rect x="6.900" y="11.500" width="2.500" height="2.500" fill="#28d828"/></svg></span><span class="t " id="F11" style="left:107.5px;transform:scaleX(0.9631)">(GintokiKamehamehaCaster мертв) равно Да</span></div>
<div class="r" style="top:192.1px">
<i class="bx" style="left:16.5px;top:3.5px"><b class="h"></b></i>
<span class="i" style="left:30.2px"><svg class="ic" width="16" height="16" viewBox="0 0 16 16"><path d="M2 8.500h12v6.500H2z" fill="#0c0c0c"/><path d="M2 10.500h12" stroke="#555" stroke-width=".8"/><path d="M2.500 8L12 2.500l1.300 2.300L3.800 10z" fill="#1a1a1a"/><path d="M5 6.400l1.500-.9M8 4.700l1.500-.9M10.800 3.100l1.300-.7" stroke="#cfcfcf" stroke-width="1.300"/></svg></span><span class="t " id="F12" style="left:50.5px;transform:scaleX(0.8500)">То - Действия</span></div>
<div class="r" style="top:208.1px">
<span class="i" style="left:49.2px"><svg class="ic" width="16" height="16" viewBox="0 0 16 16"><rect x=".5" y=".5" width="15" height="15" fill="#000" stroke="#9a7400" stroke-width="1"/><path d="M8 1.500v13M1.500 8h13M3.400 3.400l9.200 9.200M12.600 3.400l-9.200 9.200" stroke="#a4a4a4" stroke-width="2.600"/><circle cx="8" cy="8" r="4.600" fill="#b4b4b4"/><circle cx="8" cy="8" r="2" fill="#0a0a0a"/></svg></span><span class="t " id="F13" style="left:69.5px;transform:scaleX(1.0027)">Триггер - Выключить (Этот триггер)</span></div>
<div class="r" style="top:224.1px">
<span class="i" style="left:49.2px"><svg class="ic" width="16" height="16" viewBox="0 0 16 16"><rect x=".5" y=".5" width="15" height="15" fill="#000" stroke="#9a7400" stroke-width="1"/><circle cx="8" cy="3.800" r="1.600" fill="#e8c010"/><path d="M3 6.500h10M8 5.500v5M8 10l-2.200 4.500M8 10l2.200 4.500" stroke="#e8c010" stroke-width="1.500" fill="none"/><path d="M6.500 6.500h3v4h-3z" fill="#c8a008"/></svg></span><span class="t " id="F14" style="left:69.5px;transform:scaleX(0.9666)">Боевая единица - Продолжить GintokiKamehamehaCaster</span></div>
<div class="r" style="top:240.1px">
<span class="i" style="left:49.2px"><svg class="ic" width="16" height="16" viewBox="0 0 16 16"><rect x=".5" y=".5" width="15" height="15" fill="#000" stroke="#9a7400" stroke-width="1"/><circle cx="5.500" cy="5.500" r="3.300" fill="#a88400"/><circle cx="8" cy="8" r="3" fill="#c8a000"/><circle cx="10.800" cy="10.800" r="3.600" fill="#ffe400"/><circle cx="10" cy="10" r="1.200" fill="#fff8a0"/></svg></span><span class="t " id="F15" style="left:69.5px;transform:scaleX(0.9798)">Анимация - Изменить Скорость анимации GintokiKamehamehaCaster на 100.00% от начально скорости</span></div>
<div class="r" style="top:256.1px">
<i class="bx" style="left:16.5px;top:3.5px"><b class="h"></b></i>
<span class="i" style="left:30.2px"><svg class="ic" width="16" height="16" viewBox="0 0 16 16"><path d="M2 8.500h12v6.500H2z" fill="#0c0c0c"/><path d="M2 10.500h12" stroke="#555" stroke-width=".8"/><path d="M2.500 8L12 2.500l1.300 2.300L3.800 10z" fill="#1a1a1a"/><path d="M5 6.400l1.500-.9M8 4.700l1.500-.9M10.800 3.100l1.300-.7" stroke="#cfcfcf" stroke-width="1.300"/></svg></span><span class="t " id="F16" style="left:50.5px;transform:scaleX(0.9923)">Иначе - Действия</span></div>
<div class="r" style="top:272.1px">
<i class="bx" style="left:35.5px;top:3.5px"><b class="h"></b></i>
<span class="i" style="left:49.2px"><svg class="ic" width="16" height="16" viewBox="0 0 16 16"><rect x=".5" y=".5" width="15" height="15" fill="#000" stroke="#9a7400" stroke-width="1"/><path d="M4.800 6q0-3.200 3.200-3.200t3.200 3q0 1.700-3 2.700v1.500" stroke="#28d828" stroke-width="2.300" fill="none"/><rect x="6.900" y="11.500" width="2.500" height="2.500" fill="#28d828"/></svg></span><span class="t " id="F17" style="left:69.5px;transform:scaleX(0.9881)">Если (все условия истинны) тогда (запуск операции) инач<u>_</u><sup>L</sup></span></div>
<div class="r" style="top:288.1px">
<i class="bx" style="left:54.5px;top:3.5px"><b class="h"></b></i>
<span class="i" style="left:68.2px"><svg class="ic" width="16" height="16" viewBox="0 0 16 16"><path d="M3 1h8l3 3v11H3z" fill="#fff" stroke="#222" stroke-width="1.2"/><path d="M1 9h6V6.5l5 4-5 4V12H1z" fill="#1aa51a" stroke="#0a5a0a" stroke-width=".8"/></svg></span><span class="t " id="F18" style="left:88.5px;transform:scaleX(0.9802)">Если - Условия</span></div>
<div class="r" style="top:304.1px">
<span class="i" style="left:87.2px"><svg class="ic" width="16" height="16" viewBox="0 0 16 16"><rect x=".5" y=".5" width="15" height="15" fill="#000" stroke="#9a7400" stroke-width="1"/><path d="M4.800 6q0-3.200 3.200-3.200t3.200 3q0 1.700-3 2.700v1.500" stroke="#28d828" stroke-width="2.300" fill="none"/><rect x="6.900" y="11.500" width="2.500" height="2.500" fill="#28d828"/></svg></span><span class="t " id="F19" style="left:107.5px;transform:scaleX(0.9592)">GintokiKamehamehaCast больше или равно 0.50</span></div>
<div class="r" style="top:320.1px">
<i class="bx" style="left:54.5px;top:3.5px"><b class="h"></b></i>
<span class="i" style="left:68.2px"><svg class="ic" width="16" height="16" viewBox="0 0 16 16"><path d="M2 8.500h12v6.500H2z" fill="#0c0c0c"/><path d="M2 10.500h12" stroke="#555" stroke-width=".8"/><path d="M2.500 8L12 2.500l1.300 2.300L3.800 10z" fill="#1a1a1a"/><path d="M5 6.400l1.500-.9M8 4.700l1.500-.9M10.800 3.100l1.300-.7" stroke="#cfcfcf" stroke-width="1.300"/></svg></span><span class="t " id="F20" style="left:88.5px;transform:scaleX(1.0021)">То - Действия</span></div>
<div class="r" style="top:336.1px">
<span class="i" style="left:87.2px"><svg class="ic" width="16" height="16" viewBox="0 0 16 16"><rect x=".5" y=".5" width="15" height="15" fill="#000" stroke="#9a7400" stroke-width="1"/><path d="M8 1.500v13M1.500 8h13M3.400 3.400l9.200 9.200M12.600 3.400l-9.200 9.200" stroke="#a4a4a4" stroke-width="2.600"/><circle cx="8" cy="8" r="4.600" fill="#b4b4b4"/><circle cx="8" cy="8" r="2" fill="#0a0a0a"/></svg></span><span class="t " id="F21" style="left:107.5px;transform:scaleX(1.0004)">Триггер - Выключить (Этот триггер)</span></div>
<div class="r" style="top:352.1px">
<span class="i" style="left:87.2px"><svg class="ic" width="16" height="16" viewBox="0 0 16 16"><rect x=".5" y=".5" width="15" height="15" fill="#000" stroke="#9a7400" stroke-width="1"/><path d="M2 3.800l7 8.400M9 3.800l-7 8.400" stroke="#22d422" stroke-width="1.900" fill="none"/><path d="M8.500 6.500h5.500M8.500 9.500h5.500" stroke="#22d422" stroke-width="1.600"/></svg></span><span class="t " id="F22" style="left:107.5px;transform:scaleX(0.9819)">Установить GintokiKamehamehaRange = 0.00</span></div>
<div class="r" style="top:368.1px">
<span class="i" style="left:87.2px"><svg class="ic" width="16" height="16" viewBox="0 0 16 16"><rect x=".5" y=".5" width="15" height="15" fill="#000" stroke="#9a7400" stroke-width="1"/><path d="M2 3.800l7 8.400M9 3.800l-7 8.400" stroke="#22d422" stroke-width="1.900" fill="none"/><path d="M8.500 6.500h5.500M8.500 9.500h5.500" stroke="#22d422" stroke-width="1.600"/></svg></span><span class="t " id="F23" style="left:107.5px;transform:scaleX(0.9675)">Установить GintokiKamehamehaPointCaster = (Позиция GintokiKamehamehaCaster)</span></div>
<div class="r" style="top:384.1px">
<span class="i" style="left:87.2px"><svg class="ic" width="16" height="16" viewBox="0 0 16 16"><rect x=".5" y=".5" width="15" height="15" fill="#000" stroke="#9a7400" stroke-width="1"/><path d="M2 3.800l7 8.400M9 3.800l-7 8.400" stroke="#22d422" stroke-width="1.900" fill="none"/><path d="M8.500 6.500h5.500M8.500 9.500h5.500" stroke="#22d422" stroke-width="1.600"/></svg></span><span class="t " id="F24" style="left:107.5px;transform:scaleX(0.9727)">Установить GintokiKamehamehaPoint = (GintokiKamehamehaPointCaster смещение на 150.00 по отношению к GintokiKamehamehaAnge градусов)</span></div>
<div class="r" style="top:400.1px">
<span class="i" style="left:87.2px"><svg class="ic" width="16" height="16" viewBox="0 0 16 16"><rect width="16" height="16" fill="#fff"/><path d="M8 1.500v13M1.500 8h13M3.400 3.400l9.200 9.200M12.600 3.400l-9.200 9.200" stroke="#d04848" stroke-width="2.600"/><circle cx="8" cy="8" r="4.800" fill="#e88c8c" stroke="#c83c3c" stroke-width="1"/><circle cx="8" cy="8" r="2.100" fill="#fff"/></svg></span><span class="t hl" id="F25" style="left:107.5px;transform:scaleX(0.9644)">Боевая единица - Создать 1 Gintoki Dummy Wave для (Владелец GintokiKamehamehaCaster) в GintokiKamehamehaPoint поворот на (GintokiKamehamehaAnge + 180.00) градусов</span></div>
<div class="r" style="top:416.1px">
<span class="i" style="left:87.2px"><svg class="ic" width="16" height="16" viewBox="0 0 16 16"><rect x=".5" y=".5" width="15" height="15" fill="#000" stroke="#9a7400" stroke-width="1"/><circle cx="5.500" cy="5.500" r="3.300" fill="#a88400"/><circle cx="8" cy="8" r="3" fill="#c8a000"/><circle cx="10.800" cy="10.800" r="3.600" fill="#ffe400"/><circle cx="10" cy="10" r="1.200" fill="#fff8a0"/></svg></span><span class="t " id="F26" style="left:107.5px;transform:scaleX(0.9909)">Анимация - Изменить Скорость анимации (Последний созданный юнит) на 50.00% от начально скорости</span></div>
<div class="r" style="top:432.1px">
<span class="i" style="left:87.2px"><svg class="ic" width="16" height="16" viewBox="0 0 16 16"><rect x=".5" y=".5" width="15" height="15" fill="#000" stroke="#9a7400" stroke-width="1"/><path d="M2 3.800l7 8.400M9 3.800l-7 8.400" stroke="#22d422" stroke-width="1.900" fill="none"/><path d="M8.500 6.500h5.500M8.500 9.500h5.500" stroke="#22d422" stroke-width="1.600"/></svg></span><span class="t " id="F27" style="left:107.5px;transform:scaleX(0.9766)">Установить GintokiKamehamehaDummy2 = (Последний созданный юнит)</span></div>
<div class="r" style="top:448.1px">
<span class="i" style="left:87.2px"><svg class="ic" width="16" height="16" viewBox="0 0 16 16"><rect x=".5" y=".5" width="15" height="15" fill="#000" stroke="#9a7400" stroke-width="1"/><path d="M8 1.500v13M1.500 8h13M3.400 3.400l9.200 9.200M12.600 3.400l-9.200 9.200" stroke="#a4a4a4" stroke-width="2.600"/><circle cx="8" cy="8" r="4.600" fill="#b4b4b4"/><circle cx="8" cy="8" r="2" fill="#0a0a0a"/></svg></span><span class="t " id="F28" style="left:107.5px;transform:scaleX(0.9695)">Личный сценарий: call RemoveLocation(udg_GintokiKamehamehaPoint)</span></div>
<div class="r" style="top:464.1px">
<span class="i" style="left:87.2px"><svg class="ic" width="16" height="16" viewBox="0 0 16 16"><rect x=".5" y=".5" width="15" height="15" fill="#000" stroke="#9a7400" stroke-width="1"/><path d="M2 3.800l7 8.400M9 3.800l-7 8.400" stroke="#22d422" stroke-width="1.900" fill="none"/><path d="M8.500 6.500h5.500M8.500 9.500h5.500" stroke="#22d422" stroke-width="1.600"/></svg></span><span class="t " id="F29" style="left:107.5px;transform:scaleX(0.9727)">Установить GintokiKamehamehaPoint = (GintokiKamehamehaPointCaster смещение на 100.00 по отношению к GintokiKamehamehaAnge градусов)</span></div>
<div class="r" style="top:480.1px">
<span class="i" style="left:87.2px"><svg class="ic" width="16" height="16" viewBox="0 0 16 16"><rect x=".5" y=".5" width="15" height="15" fill="#000" stroke="#9a7400" stroke-width="1"/><circle cx="8" cy="3.800" r="1.600" fill="#e8c010"/><path d="M3 6.500h10M8 5.500v5M8 10l-2.200 4.500M8 10l2.200 4.500" stroke="#e8c010" stroke-width="1.500" fill="none"/><path d="M6.500 6.500h3v4h-3z" fill="#c8a008"/></svg></span><span class="t " id="F30" style="left:107.5px;transform:scaleX(0.9626)">Боевая единица - Создать 1 Gintoki Dummy Kamehameha для (Владелец GintokiKamehamehaCaster) в GintokiKamehamehaPoint поворот на GintokiKamehamehaAnge градусов</span></div>
<div class="r" style="top:496.1px">
<span class="i" style="left:87.2px"><svg class="ic" width="16" height="16" viewBox="0 0 16 16"><rect x=".5" y=".5" width="15" height="15" fill="#000" stroke="#9a7400" stroke-width="1"/><path d="M2 3.800l7 8.400M9 3.800l-7 8.400" stroke="#22d422" stroke-width="1.900" fill="none"/><path d="M8.500 6.500h5.500M8.500 9.500h5.500" stroke="#22d422" stroke-width="1.600"/></svg></span><span class="t " id="F31" style="left:107.5px;transform:scaleX(0.9772)">Установить GintokiKamehamehaDummy = (Последний созданный юнит)</span></div>
<div class="r" style="top:512.1px">
<span class="i" style="left:87.2px"><svg class="ic" width="16" height="16" viewBox="0 0 16 16"><rect x=".5" y=".5" width="15" height="15" fill="#000" stroke="#9a7400" stroke-width="1"/><circle cx="5.500" cy="5.500" r="3.300" fill="#a88400"/><circle cx="8" cy="8" r="3" fill="#c8a000"/><circle cx="10.800" cy="10.800" r="3.600" fill="#ffe400"/><circle cx="10" cy="10" r="1.200" fill="#fff8a0"/></svg></span><span class="t " id="F32" style="left:107.5px;transform:scaleX(0.9815)">Анимация - Изменить (Последний созданный юнит)'s размер до (220.00%, 220.00%, 220.00%) первоначального размера</span></div>
<div class="r" style="top:528.1px">
<span class="i" style="left:87.2px"><svg class="ic" width="16" height="16" viewBox="0 0 16 16"><rect x=".5" y=".5" width="15" height="15" fill="#000" stroke="#9a7400" stroke-width="1"/><path d="M2 3.500h12" stroke="#c89a10" stroke-width="1.500"/><circle cx="4.300" cy="7" r="1.400" fill="#e8c010"/><circle cx="8" cy="7" r="1.400" fill="#e8c010"/><circle cx="11.700" cy="7" r="1.400" fill="#e8c010"/><path d="M3.300 9h2v5h-2zM7 9h2v5H7zM10.700 9h2v5h-2z" fill="#e8c010"/></svg></span><span class="t " id="F33" style="left:107.5px;transform:scaleX(0.9785)">Отряд - Добавить (Последний созданный юнит) к AllRangeDummy</span></div>
<div class="r" style="top:544.1px">
<span class="i" style="left:87.2px"><svg class="ic" width="16" height="16" viewBox="0 0 16 16"><rect x=".5" y=".5" width="15" height="15" fill="#000" stroke="#9a7400" stroke-width="1"/><path d="M8 1.500v13M1.500 8h13M3.400 3.400l9.200 9.200M12.600 3.400l-9.200 9.200" stroke="#a4a4a4" stroke-width="2.600"/><circle cx="8" cy="8" r="4.600" fill="#b4b4b4"/><circle cx="8" cy="8" r="2" fill="#0a0a0a"/></svg></span><span class="t " id="F34" style="left:107.5px;transform:scaleX(0.9656)">Личный сценарий: call RemoveLocation(udg_GintokiKamehamehaPointCaster)</span></div>
<div class="r" style="top:560.1px">
<span class="i" style="left:87.2px"><svg class="ic" width="16" height="16" viewBox="0 0 16 16"><rect x=".5" y=".5" width="15" height="15" fill="#000" stroke="#9a7400" stroke-width="1"/><path d="M8 1.500v13M1.500 8h13M3.400 3.400l9.200 9.200M12.600 3.400l-9.200 9.200" stroke="#a4a4a4" stroke-width="2.600"/><circle cx="8" cy="8" r="4.600" fill="#b4b4b4"/><circle cx="8" cy="8" r="2" fill="#0a0a0a"/></svg></span><span class="t " id="F35" style="left:107.5px;transform:scaleX(0.9695)">Личный сценарий: call RemoveLocation(udg_GintokiKamehamehaPoint)</span></div>
<div class="r" style="top:576.1px">
<span class="i" style="left:87.2px"><svg class="ic" width="16" height="16" viewBox="0 0 16 16"><rect x=".5" y=".5" width="15" height="15" fill="#000" stroke="#9a7400" stroke-width="1"/><path d="M8 1.500v13M1.500 8h13M3.400 3.400l9.200 9.200M12.600 3.400l-9.200 9.200" stroke="#a4a4a4" stroke-width="2.600"/><circle cx="8" cy="8" r="4.600" fill="#b4b4b4"/><circle cx="8" cy="8" r="2" fill="#0a0a0a"/></svg></span><span class="t " id="F36" style="left:107.5px;transform:scaleX(0.9823)">Триггер - Включить Sakata Gintoki Kamehameha Act &lt;gen&gt;</span></div>
<div class="r" style="top:592.1px">
<i class="bx" style="left:54.5px;top:3.5px"><b class="h"></b></i>
<span class="i" style="left:68.2px"><svg class="ic" width="16" height="16" viewBox="0 0 16 16"><path d="M2 8.500h12v6.500H2z" fill="#0c0c0c"/><path d="M2 10.500h12" stroke="#555" stroke-width=".8"/><path d="M2.500 8L12 2.500l1.300 2.300L3.800 10z" fill="#1a1a1a"/><path d="M5 6.400l1.500-.9M8 4.700l1.500-.9M10.800 3.100l1.300-.7" stroke="#cfcfcf" stroke-width="1.300"/></svg></span><span class="t " id="F37" style="left:88.5px;transform:scaleX(0.9876)">Иначе - Действия</span></div>
<div class="r" style="top:608.1px">
<span class="i" style="left:87.2px"><svg class="ic" width="16" height="16" viewBox="0 0 16 16"><rect x=".5" y=".5" width="15" height="15" fill="#000" stroke="#9a7400" stroke-width="1"/><path d="M2 3.800l7 8.400M9 3.800l-7 8.400" stroke="#22d422" stroke-width="1.900" fill="none"/><path d="M8.500 6.500h5.500M8.500 9.500h5.500" stroke="#22d422" stroke-width="1.600"/></svg></span><span class="t " id="F38" style="left:107.5px;transform:scaleX(0.9626)">Установить GintokiKamehamehaCast = (GintokiKamehamehaCast + 0.02)</span></div>
<div class="r" style="top:624.1px">
<span class="i" style="left:87.2px"><svg class="ic" width="16" height="16" viewBox="0 0 16 16"><rect x=".5" y=".5" width="15" height="15" fill="#000" stroke="#9a7400" stroke-width="1"/><circle cx="8" cy="3.800" r="1.600" fill="#e8c010"/><path d="M3 6.500h10M8 5.500v5M8 10l-2.200 4.500M8 10l2.200 4.500" stroke="#e8c010" stroke-width="1.500" fill="none"/><path d="M6.500 6.500h3v4h-3z" fill="#c8a008"/></svg></span><span class="t " id="F39" style="left:107.5px;transform:scaleX(0.9775)">Боевая единица - Заставить GintokiKamehamehaCaster повернуться под углом GintokiKamehamehaAnge в течении 0.02 секунд</span></div>
   <div class="a sb" style="right:0;top:0;width:17px;height:646px">
     <i class="a arr" style="left:4.500px;top:7px;border-width:3.500px;border-bottom:4px solid #606060;border-top:0"></i>
     <i class="a arr" style="left:4.500px;bottom:7px;border-width:3.500px;border-top:4px solid #606060;border-bottom:0"></i>
     <div class="a thumb" style="left:1px;top:168px;width:15px;height:459px"></div>
     <div class="a" style="left:5px;top:395px;width:7px;height:7px;background:repeating-linear-gradient(180deg,#666 0,#666 1px,transparent 1px,transparent 2px)"></div>
   </div>
   <div class="a sb" style="left:0;bottom:0;width:987px;height:17px">
     <i class="a arr" style="left:6px;top:4.500px;border-width:3.500px;border-right:4px solid #606060;border-left:0"></i>
     <i class="a arr" style="right:6px;top:4.500px;border-width:3.500px;border-left:4px solid #606060;border-right:0"></i>
     <div class="a thumbh" style="left:80px;top:1px;width:890px;height:15px"></div>
     <div class="a" style="left:520px;top:5px;width:7px;height:7px;background:repeating-linear-gradient(90deg,#666 0,#666 1px,transparent 1px,transparent 2px)"></div>
   </div>
   <div class="a sb" style="right:0;bottom:0;width:17px;height:17px"><i class="a" style="right:2px;bottom:2px;width:10px;height:10px;background:radial-gradient(circle,#b0b0b0 1px,transparent 1.200px) 0 0/3.300px 3.300px;clip-path:polygon(100% 0,100% 100%,0 100%)"></i></div>
  </div>
 </div>
</div>

<div id="tb" class="a">
<div class="a" style="left:13px;top:10px;width:36px;height:36px;border-radius:18px;background:linear-gradient(180deg,rgba(255,255,255,.5) 0,rgba(255,255,255,.22) 46%,rgba(255,255,255,0) 50%),radial-gradient(circle at 50% 96%,#2ee0fa 0,#0c74bc 32%,#0a4c8c 58%,#3e6e98 82%,#7e9cb6 100%);box-shadow:0 0 2px 1px rgba(30,60,100,.55),inset 0 0 1.500px 1px rgba(220,240,255,.6)"></div>
<svg class="a" style="left:19px;top:15px" width="24" height="24" viewBox="0 0 24 24"><path d="M3 5q4-2.500 8-.5l-1.800 6.500q-4-2-8 .5z" fill="#e8542a"/><path d="M12.500 5q4 2 8-.5l-1.800 6.500q-4 2.500-8 .5z" fill="#7ec03a"/><path d="M1 13q4-2.500 8-.5l-1.800 6.500q-4-2-8 .5z" fill="#3a9ae8" transform="translate(1.500 0)"/><path d="M10.500 13q4 2 8-.5l-1.800 6.500q-4 2.500-8 .5z" fill="#f8c820"/></svg>
<div class="a tbtn" style="top:62.8px;width:59px"></div>
<svg class="a" style="left:23.0px;top:68.8px" width="16" height="16" viewBox="0 0 20 20"><circle cx="10" cy="10" r="8" fill="#e8e8e8"/><path d="M10 10L3.100 6A8 8 0 0 1 16.900 6z" fill="#e04030"/><path d="M10 10L16.900 6A8 8 0 0 1 10 18z" fill="#f4c020"/><path d="M10 10L10 18A8 8 0 0 1 3.100 6z" fill="#30a050"/><circle cx="10" cy="10" r="3.800" fill="#fff"/><circle cx="10" cy="10" r="3" fill="#3a7ae0"/></svg>
<div class="a tbtn" style="top:94.8px;width:55px"></div><div class="a" style="left:56px;top:95.8px;width:2px;height:26px;border-right:1px solid #6f86a3;background:#c6d6ea"></div>
<svg class="a" style="left:22.0px;top:99.8px" width="18" height="18" viewBox="0 0 20 20"><path d="M1 4h7l1.500 2h9.500v11h-18z" fill="#e8d070"/><path d="M1 7h18v10h-18z" fill="#f4e490"/><path d="M3 10h14v7h-14z" fill="#6ab0e8"/><path d="M6 13h8v4h-8z" fill="#3a80c8"/></svg>
<svg class="a" style="left:22.5px;top:132.3px" width="17" height="17" viewBox="0 0 20 20"><rect x="1" y="1" width="18" height="18" rx="2" fill="#9ccaf0"/><rect x="2" y="2" width="16" height="16" rx="2" fill="#bcdcf6"/><circle cx="10" cy="10" r="6.500" fill="#f08a18"/><path d="M8 6.500l5.500 3.500L8 13.500z" fill="#fff"/></svg>
<div class="a tbtn" style="top:158.8px;width:53px"></div><div class="a" style="left:54px;top:159.8px;width:2px;height:26px;border-right:1px solid #6f86a3;background:#c6d6ea"></div><div class="a" style="left:56px;top:159.8px;width:2px;height:26px;border-right:1px solid #6f86a3;background:#c6d6ea"></div>
<svg class="a" style="left:22.0px;top:195.8px" width="18" height="18" viewBox="0 0 20 20"><circle cx="8" cy="9" r="6" fill="#d86a5a"/><circle cx="12" cy="8" r="4.500" fill="#c8c0d8"/><circle cx="13" cy="13" r="3" fill="#e8c030"/><circle cx="6" cy="6" r="2.500" fill="#8a6aa8"/><circle cx="14" cy="14" r="1.800" fill="#3a70c8"/></svg>
<div class="a" style="left:12px;top:220.8px;width:38px;height:1px;background:linear-gradient(90deg,transparent,#8fa6c2 30%,#8fa6c2 70%,transparent)"></div>
<svg class="a" style="left:22.0px;top:227.8px" width="18" height="18" viewBox="0 0 20 20"><rect x="1.500" y="3" width="17" height="14" fill="#fff" stroke="#222" stroke-width="1.400"/><rect x="2" y="3.500" width="16" height="3" fill="#1a2ab8"/></svg>
<div class="a" style="left:14px;top:252.8px;width:34px;height:3px;border-radius:2px;background:radial-gradient(ellipse at center,#d8ecff 0,rgba(200,225,250,0) 75%)"></div>
<svg class="a" style="left:22.5px;top:260.3px" width="17" height="17" viewBox="0 0 20 20"><circle cx="10" cy="10" r="8" fill="#181410"/><circle cx="9" cy="9" r="4.500" fill="#e8c020"/><path d="M5 8h8M5 10.500h6" stroke="#181410" stroke-width="1.200"/><circle cx="14.500" cy="14" r="2.500" fill="#4a90d8"/><circle cx="14.500" cy="14" r="1.200" fill="#e8d040"/></svg>
<svg class="a" style="left:22.0px;top:291.8px" width="18" height="18" viewBox="0 0 20 20"><path d="M6 7.500h3l4.500-4.500v14l-4.500-4.500h-3z" fill="#a8a8a8" stroke="#8a8a8a" stroke-width=".6"/><path d="M12 3v14" stroke="#c8c8c8" stroke-width="1.400"/></svg>
<svg class="a" style="left:22.0px;top:323.8px" width="18" height="18" viewBox="0 0 20 20"><rect x="1" y="1" width="18" height="18" fill="#f4f0f4"/><circle cx="10" cy="10" r="6.500" fill="none" stroke="#d03040" stroke-width="2" stroke-dasharray="4 2.500"/><circle cx="10" cy="10" r="2" fill="#d03040"/><path d="M2 2l3 3M18 2l-3 3M2 18l3-3M18 18l-3-3" stroke="#3a50b0" stroke-width="1.500"/></svg>
<svg class="a" style="left:22.0px;top:355.8px" width="18" height="18" viewBox="0 0 20 20"><rect x="1" y="1" width="18" height="18" rx="2" fill="#0c0c08"/><circle cx="10" cy="10" r="7" fill="#1a1a10" stroke="#c8b020" stroke-width="1.200"/><path d="M5.500 11q4.500 5 9 0" stroke="#2a9a4a" stroke-width="1.600" fill="none"/><circle cx="7" cy="7.500" r="1.200" fill="#2a9a4a"/><circle cx="13" cy="7.500" r="1.200" fill="#2a9a4a"/><path d="M2 2h3v3H2zM15 2h3v3h-3zM2 15h3v3H2zM15 15h3v3h-3z" fill="#d8c020"/></svg>
<svg class="a" style="left:22.5px;top:387.8px" width="17" height="18" viewBox="0 0 20 20"><rect x="2" y="1" width="16" height="18" rx="3" fill="#2a2a2a"/><rect x="4" y="3" width="12" height="14" rx="2" fill="#8a8a8a"/><circle cx="10" cy="9" r="3.500" fill="#222"/><rect x="6" y="13" width="8" height="3" fill="#444"/><circle cx="10" cy="9" r="1.500" fill="#b0b0b0"/></svg>
<svg class="a" style="left:22.5px;top:420.3px" width="17" height="17" viewBox="0 0 20 20"><rect x="1" y="1" width="18" height="18" fill="#0c0c0c"/><path d="M8 3h4v5l4.500 8h-13L8 8z" fill="#f0f0f0"/><path d="M6 12h8l2.500 4h-13z" fill="#c8c8c8"/></svg>
<svg class="a" style="left:22.0px;top:451.8px" width="18" height="18" viewBox="0 0 20 20"><circle cx="6" cy="5" r="3" fill="#30c030"/><circle cx="14" cy="5" r="3" fill="#e8d820"/><circle cx="6" cy="14" r="3" fill="#20c0d8"/><circle cx="14" cy="14" r="3" fill="#e03030"/><path d="M6 5h8M6 14h8M6 5v9M14 5v9M10 5v9" stroke="#222" stroke-width="1.400"/></svg>
<svg class="a" style="left:22.0px;top:483.8px" width="18" height="18" viewBox="0 0 20 20"><path d="M10 1l8 4.500v9L10 19l-8-4.500v-9z" fill="#e02828"/><path d="M10 3.500l5.800 3.300v6.400L10 16.500l-5.800-3.300V6.800z" fill="#1a1010"/><path d="M12.500 7.500h-4v2.500h3.500v3h-4.500" stroke="#e02828" stroke-width="1.600" fill="none"/></svg>
<div class="a tbtn" style="top:510.8px;width:59px"></div>
<svg class="a" style="left:22.0px;top:515.8px" width="18" height="18" viewBox="0 0 20 20"><rect x="2" y="3" width="16" height="12" rx="3" fill="#7289da"/><path d="M12 15l4 3.500V14z" fill="#7289da"/><circle cx="7.500" cy="9" r="1.600" fill="#fff"/><circle cx="12.500" cy="9" r="1.600" fill="#fff"/><path d="M6 6.500q4-1.500 8 0" stroke="#fff" stroke-width="1" fill="none"/></svg>
<div class="a tbtn" style="top:542.8px;width:55px"></div><div class="a" style="left:56px;top:543.8px;width:2px;height:26px;border-right:1px solid #6f86a3;background:#c6d6ea"></div>
<svg class="a" style="left:21.5px;top:547.3px" width="19" height="19" viewBox="0 0 20 20"><circle cx="10" cy="10" r="8.500" fill="#16304e"/><circle cx="10" cy="10" r="8.500" fill="none" stroke="#e8eef4" stroke-width=".6"/><circle cx="12.500" cy="7.500" r="3" fill="none" stroke="#fff" stroke-width="1.500"/><path d="M1.500 10.500l5.500 2.500 3-3" stroke="#fff" stroke-width="2" fill="none"/><circle cx="7" cy="13.500" r="2" fill="#fff"/></svg>
<div class="a tbtn" style="top:574.8px;width:59px"></div>
<svg class="a" style="left:22.5px;top:579.8px" width="17" height="18" viewBox="0 0 20 20"><rect x="3" y="2" width="14" height="16" fill="#e8e4b0" stroke="#b8b480" stroke-width=".8"/><rect x="4.500" y="3.500" width="11" height="13" fill="#b8e4ec"/><path d="M3 2h14v2H3z" fill="#f4f0c8"/></svg>
<div class="a tray" style="top:903.9px;left:-2px;font-size:12.500px;color:#e4ebf4;line-height:16px;transform:scaleX(.82)">EN</div>
<i class="a arr" style="left:45px;top:935.1px;border-left:6px solid #e8eef6;border-right:0"></i>
<svg class="a" style="left:10px;top:954.7px" width="20" height="18" viewBox="0 0 20 18"><path d="M1 6h3.500l4.500-4.500v15L4.500 12H1z" fill="#f4f4f4" stroke="#6a7a8a" stroke-width=".8"/><path d="M11.500 5.500q2.500 3.500 0 7M14 3.500q4 5.500 0 11" stroke="#e8eef6" stroke-width="1.300" fill="none"/></svg>
<svg class="a" style="left:35px;top:954.7px" width="20" height="18" viewBox="0 0 20 18"><rect x="5" y="5" width="13" height="9" fill="#8aa0b8" stroke="#f0f4f8" stroke-width="1.400"/><rect x="1" y="1" width="7" height="5" fill="#f4f4f4" stroke="#4a5a6a" stroke-width=".8"/><path d="M7 16h9" stroke="#f0f4f8" stroke-width="1.400"/></svg>
<svg class="a" style="left:10px;top:977.1px" width="22" height="22" viewBox="0 0 22 22"><path d="M3 2v18" stroke="#f4f4f4" stroke-width="1.800"/><path d="M4 3h11l-2.500 4 2.500 4H4z" fill="#f4f4f4" stroke="#5a6a7a" stroke-width=".6"/><circle cx="14.500" cy="15" r="5" fill="#e02020" stroke="#fff" stroke-width=".8"/><path d="M12.500 13l4 4M16.500 13l-4 4" stroke="#fff" stroke-width="1.500"/></svg>
<div class="a tray" style="top:1001.8px;left:-1px;font-size:12.500px;color:#f4f7fb;line-height:16px;transform:scaleX(.9)">18:53</div>
<div class="a tray" style="top:1018.4px;left:-1px;font-size:12.500px;color:#f4f7fb;line-height:16px;transform:scaleX(.86)">23.07.2019</div>
<div class="a" style="left:1px;top:1036.2px;width:59px;height:20px;border:1px solid #5f7088;border-radius:3px;background:linear-gradient(180deg,#c8d4e2 0,#9aabc0 50%,#8a9bb2 100%)"></div>
</div>
</div>
</body></html>
